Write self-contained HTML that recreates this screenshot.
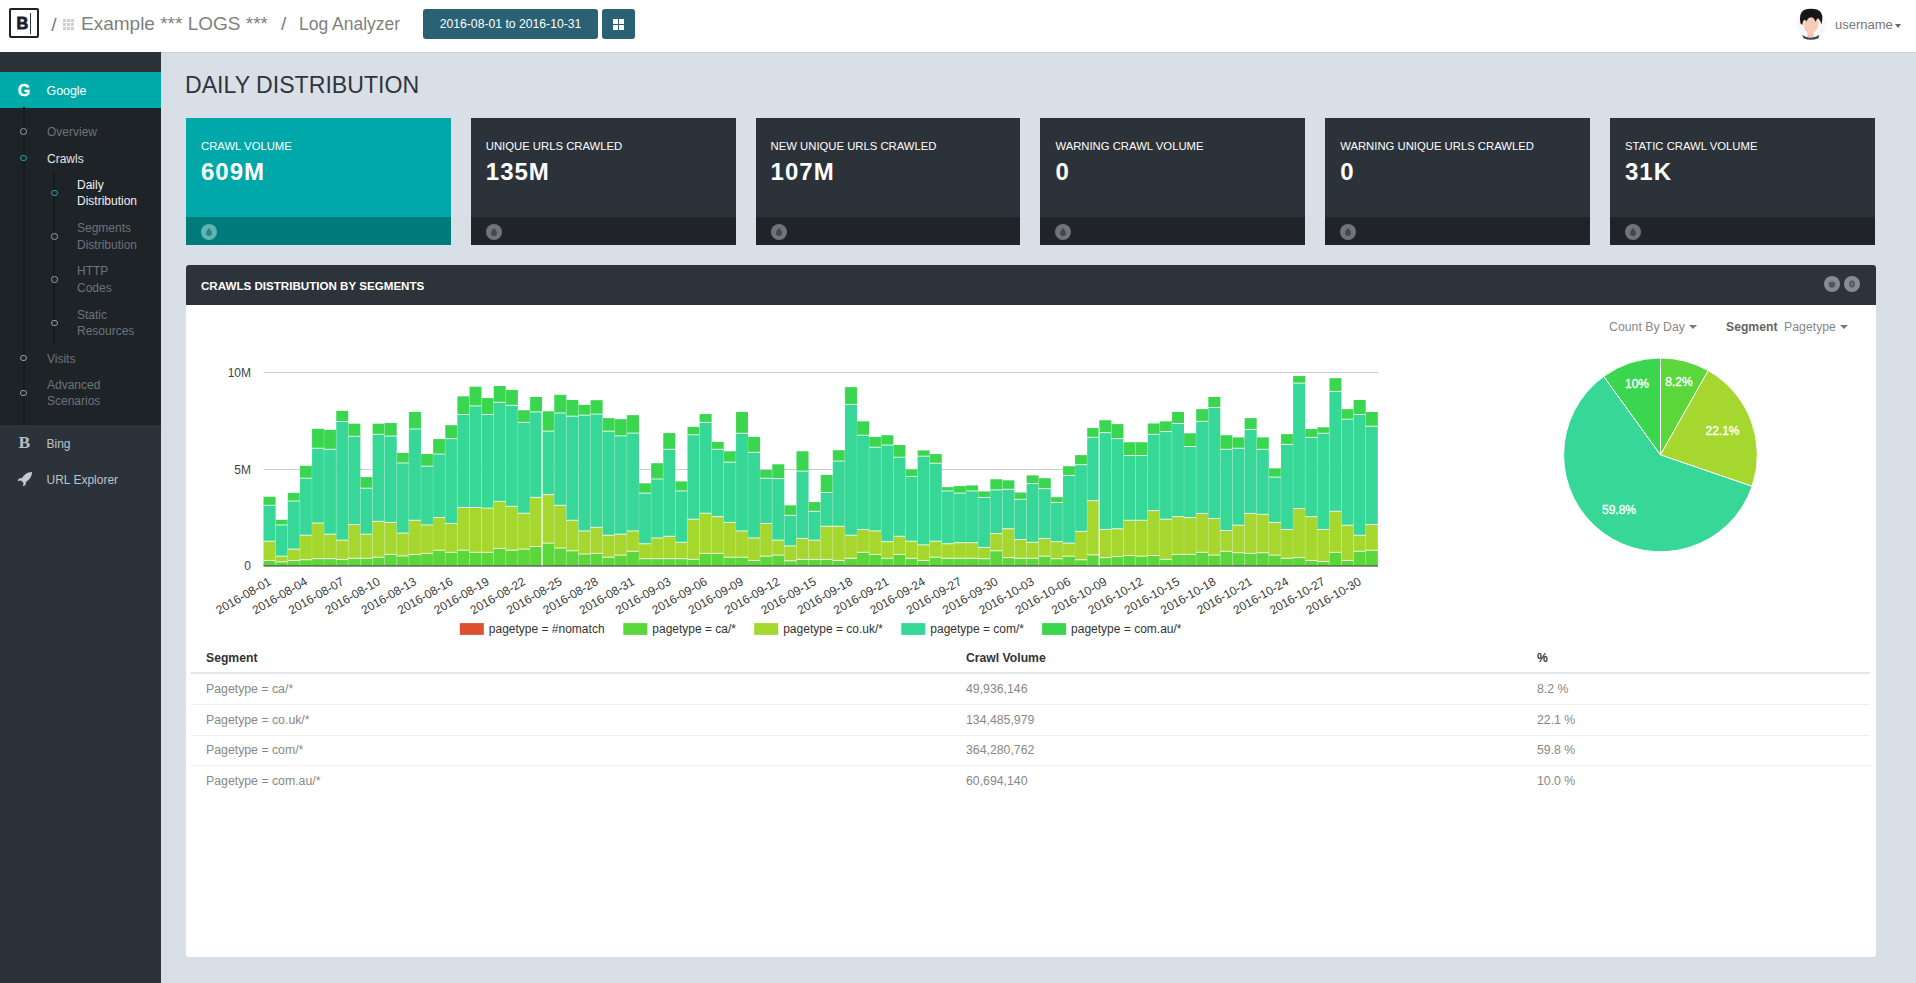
<!DOCTYPE html><html><head><meta charset="utf-8"><title>Log Analyzer</title><style>
*{box-sizing:border-box}
html,body{margin:0;padding:0}
body{width:1916px;height:983px;overflow:hidden;background:#d9dfe6;font-family:"Liberation Sans",sans-serif;position:relative}
.a{position:absolute;white-space:nowrap}
.hdr{left:0;top:0;width:1916px;height:52px;background:#fff}
.hline{left:161px;top:52px;width:1755px;height:1px;background:#c5ccd3}
.vline{left:165px;top:53px;width:1px;height:930px;background:#d5dbe2}
.side{left:0;top:52px;width:161px;height:931px;background:#2b3239}
.sub{left:0;top:108px;width:161px;height:317px;background:#1e2328}
.nav{font-size:12px;color:#6d7379;line-height:16px}
.ring{width:6.6px;height:6.6px;border:1.7px solid #9a9fa4;border-radius:50%;background:#1e2328}
.card{width:264.8px;height:127px;background:#2c3239;top:118px}
.card .ft{position:absolute;left:0;bottom:0;width:100%;height:28px;background:#202428}
.card .lb{position:absolute;left:15px;top:20px;font-size:11.3px;color:#fff;line-height:16px}
.card .vl{position:absolute;left:15px;top:40px;font-size:24px;font-weight:bold;color:#fff;line-height:28px;letter-spacing:1px}
.card .ic{position:absolute;left:15px;top:7px;width:16px;height:16px;border-radius:50%;background:#7a7f84}
.panel{left:186px;top:265px;width:1690px;height:692px;background:#fff;border-radius:3px}
.phd{left:186px;top:265px;width:1690px;height:40px;background:#2c333a;border-radius:3px 3px 0 0}
.th{font-size:12.2px;font-weight:bold;color:#333;line-height:16px}
.td{font-size:12.3px;color:#888;line-height:16px}
</style></head><body>
<div class="a hdr"></div><div class="a hline"></div><div class="a vline"></div>
<div class="a" style="left:9px;top:8px;width:30px;height:30px;border:2.4px solid #222;border-radius:2px;background:#fff"></div>
<div class="a" style="left:16.5px;top:14px;font-size:16.3px;font-weight:bold;color:#1e1b2a;line-height:18px;-webkit-text-stroke:0.8px #1e1b2a">B</div>
<div class="a" style="left:29.8px;top:13.2px;width:1.2px;height:20.4px;background:#333"></div>
<div class="a" style="left:51.3px;top:13.8px;font-size:19px;color:#777;line-height:22px">/</div>
<div class="a" style="left:63px;top:19px;width:3px;height:3px;background:#cfcfcf"></div><div class="a" style="left:67px;top:19px;width:3px;height:3px;background:#cfcfcf"></div><div class="a" style="left:71px;top:19px;width:3px;height:3px;background:#cfcfcf"></div><div class="a" style="left:63px;top:23px;width:3px;height:3px;background:#cfcfcf"></div><div class="a" style="left:67px;top:23px;width:3px;height:3px;background:#cfcfcf"></div><div class="a" style="left:71px;top:23px;width:3px;height:3px;background:#cfcfcf"></div><div class="a" style="left:63px;top:27px;width:3px;height:3px;background:#cfcfcf"></div><div class="a" style="left:67px;top:27px;width:3px;height:3px;background:#cfcfcf"></div><div class="a" style="left:71px;top:27px;width:3px;height:3px;background:#cfcfcf"></div>
<div class="a" style="left:81px;top:13px;font-size:19px;color:#808080;line-height:22px">Example *** LOGS ***</div>
<div class="a" style="left:281px;top:13px;font-size:19px;color:#777;line-height:22px">/</div>
<div class="a" style="left:299px;top:13px;font-size:17.5px;color:#808080;line-height:22px">Log Analyzer</div>
<div class="a" style="left:423px;top:9px;width:175px;height:30px;background:#2a6175;border-radius:3px;color:#fff;font-size:12.2px;line-height:30px;text-align:center">2016-08-01 to 2016-10-31</div>
<div class="a" style="left:602px;top:9px;width:33px;height:30px;background:#2a6175;border-radius:3px"></div>
<div class="a" style="left:613px;top:19px;width:5px;height:5px;background:#fff"></div>
<div class="a" style="left:619px;top:19px;width:5px;height:5px;background:#fff"></div>
<div class="a" style="left:613px;top:25px;width:5px;height:5px;background:#fff"></div>
<div class="a" style="left:619px;top:25px;width:5px;height:5px;background:#fff"></div>
<svg class="a" style="left:1792px;top:4px" width="40" height="40" viewBox="0 0 40 40"><circle cx="19" cy="20" r="14.8" fill="#f6f7f9"/><path d="M10.2 31 Q18.5 36 27.3 31 L26.5 34.2 Q18.5 37.5 11.5 34.2 Z" fill="#3b4b49"/><path d="M15.5 27 L15.5 33 Q18.5 34 21.5 33 L21.5 27 Z" fill="#f3c3a8"/><path d="M11.8 14 L11.8 22 Q12.5 28 18.3 30 Q24 28 26.4 22 L26.4 14 Z" fill="#f7cdb5"/><path d="M8.5 19.5 Q6.5 9 12 6 Q18 3.6 25 5.5 Q31 8 30.3 15 L29.6 20.5 Q28 16 26.5 14.5 Q25 13.5 23.5 18 Q22 13 19.5 13.5 Q16 13 14.5 17.5 Q13 15 12 16 Q10.5 17.5 10.3 21 Z" fill="#161616"/></svg>
<div class="a" style="left:1835px;top:17px;font-size:13px;color:#777;line-height:16px">username</div>
<div class="a" style="left:1894.5px;top:24px;width:0;height:0;border-left:3.5px solid transparent;border-right:3.5px solid transparent;border-top:4px solid #666"></div>
<div class="a side"></div>
<div class="a" style="left:0;top:72px;width:161px;height:36px;background:#00aaa9"></div>
<div class="a" style="left:17.8px;top:81.5px;font-size:16px;font-weight:bold;color:#fff;line-height:18px;-webkit-text-stroke:0.3px #fff">G</div>
<div class="a" style="left:46.5px;top:82.5px;font-size:12.4px;color:#fff;line-height:16px">Google</div>
<div class="a sub"></div>
<div class="a" style="left:23px;top:107px;width:2px;height:318px;background:#161a1e"></div>
<div class="a" style="left:53px;top:172px;width:2px;height:171px;background:#161a1e"></div>
<div class="a ring" style="left:20.2px;top:128.2px;border-color:#9a9fa4"></div>
<div class="a nav" style="left:47px;top:124.0px;color:#6d7379">Overview</div>
<div class="a ring" style="left:20.2px;top:154.7px;border-color:#1aa3a3"></div>
<div class="a nav" style="left:47px;top:151px;color:#e6e6e6">Crawls</div>
<div class="a ring" style="left:20.2px;top:354.7px;border-color:#9a9fa4"></div>
<div class="a nav" style="left:47px;top:350.5px;color:#6d7379">Visits</div>
<div class="a ring" style="left:20.2px;top:389.7px;border-color:#9a9fa4"></div>
<div class="a nav" style="left:47px;top:376.5px;color:#6d7379;line-height:16.5px">Advanced<br>Scenarios</div>
<div class="a ring" style="left:51.2px;top:189.7px;border-color:#1aa3a3"></div>
<div class="a nav" style="left:77px;top:176.5px;color:#f0f0f0;line-height:16.5px">Daily<br>Distribution</div>
<div class="a ring" style="left:51.2px;top:233.2px;border-color:#9a9fa4"></div>
<div class="a nav" style="left:77px;top:220.0px;color:#6d7379;line-height:16.5px">Segments<br>Distribution</div>
<div class="a ring" style="left:51.2px;top:276.2px;border-color:#9a9fa4"></div>
<div class="a nav" style="left:77px;top:263.0px;color:#6d7379;line-height:16.5px">HTTP<br>Codes</div>
<div class="a ring" style="left:51.2px;top:319.7px;border-color:#9a9fa4"></div>
<div class="a nav" style="left:77px;top:306.5px;color:#6d7379;line-height:16.5px">Static<br>Resources</div>
<div class="a" style="left:18.5px;top:432.5px;font-size:17.5px;font-weight:bold;color:#b9bdc1;line-height:18px;font-family:'Liberation Serif',serif">B</div>
<div class="a nav" style="left:46.5px;top:435.5px;color:#bfc3c7">Bing</div>
<svg class="a" style="left:16.5px;top:470.5px" width="16" height="16" viewBox="0 0 16 16"><path d="M15 1 C10 1 7 4 5 7 L2 7.5 L0.5 10 L4 9.5 L6.5 12 L6 15.5 L8.5 14 L9 11 C12 9 15 6 15 1 Z" fill="#c5c9cd"/></svg>
<div class="a nav" style="left:46.5px;top:471.5px;color:#bfc3c7">URL Explorer</div>
<div class="a" style="left:185.3px;top:70.4px;font-size:24.3px;color:#30353c;line-height:30px;transform:scaleX(0.951);transform-origin:0 0">DAILY DISTRIBUTION</div>
<div class="a card" style="left:186.0px;background:#00a8aa"><div class="lb">CRAWL VOLUME</div><div class="vl">609M</div><div class="ft" style="background:#007b7c"><div class="ic" style="background:#5db6b5"><svg width="16" height="16" viewBox="0 0 16 16" style="position:absolute;left:0;top:0"><path d="M8 3.8 C9.5 6 11 7.3 11 9.3 C11 11 9.7 12 8 12 C6.3 12 5 11 5 9.3 C5 7.3 6.5 6 8 3.8 Z" fill="#2f8583"/></svg></div></div></div>
<div class="a card" style="left:470.8px;background:#2c3239"><div class="lb">UNIQUE URLS CRAWLED</div><div class="vl">135M</div><div class="ft" style="background:#202428"><div class="ic" style="background:#6f7479"><svg width="16" height="16" viewBox="0 0 16 16" style="position:absolute;left:0;top:0"><path d="M8 3.8 C9.5 6 11 7.3 11 9.3 C11 11 9.7 12 8 12 C6.3 12 5 11 5 9.3 C5 7.3 6.5 6 8 3.8 Z" fill="#45494d"/></svg></div></div></div>
<div class="a card" style="left:755.6px;background:#2c3239"><div class="lb">NEW UNIQUE URLS CRAWLED</div><div class="vl">107M</div><div class="ft" style="background:#202428"><div class="ic" style="background:#6f7479"><svg width="16" height="16" viewBox="0 0 16 16" style="position:absolute;left:0;top:0"><path d="M8 3.8 C9.5 6 11 7.3 11 9.3 C11 11 9.7 12 8 12 C6.3 12 5 11 5 9.3 C5 7.3 6.5 6 8 3.8 Z" fill="#45494d"/></svg></div></div></div>
<div class="a card" style="left:1040.4px;background:#2c3239"><div class="lb">WARNING CRAWL VOLUME</div><div class="vl">0</div><div class="ft" style="background:#202428"><div class="ic" style="background:#6f7479"><svg width="16" height="16" viewBox="0 0 16 16" style="position:absolute;left:0;top:0"><path d="M8 3.8 C9.5 6 11 7.3 11 9.3 C11 11 9.7 12 8 12 C6.3 12 5 11 5 9.3 C5 7.3 6.5 6 8 3.8 Z" fill="#45494d"/></svg></div></div></div>
<div class="a card" style="left:1325.2px;background:#2c3239"><div class="lb">WARNING UNIQUE URLS CRAWLED</div><div class="vl">0</div><div class="ft" style="background:#202428"><div class="ic" style="background:#6f7479"><svg width="16" height="16" viewBox="0 0 16 16" style="position:absolute;left:0;top:0"><path d="M8 3.8 C9.5 6 11 7.3 11 9.3 C11 11 9.7 12 8 12 C6.3 12 5 11 5 9.3 C5 7.3 6.5 6 8 3.8 Z" fill="#45494d"/></svg></div></div></div>
<div class="a card" style="left:1610.0px;background:#2c3239"><div class="lb">STATIC CRAWL VOLUME</div><div class="vl">31K</div><div class="ft" style="background:#202428"><div class="ic" style="background:#6f7479"><svg width="16" height="16" viewBox="0 0 16 16" style="position:absolute;left:0;top:0"><path d="M8 3.8 C9.5 6 11 7.3 11 9.3 C11 11 9.7 12 8 12 C6.3 12 5 11 5 9.3 C5 7.3 6.5 6 8 3.8 Z" fill="#45494d"/></svg></div></div></div>
<div class="a panel"></div>
<div class="a phd"></div>
<div class="a" style="left:201px;top:278px;font-size:11.6px;font-weight:bold;color:#fff;line-height:16px">CRAWLS DISTRIBUTION BY SEGMENTS</div>
<svg class="a" style="left:1824px;top:276px" width="16" height="16" viewBox="0 0 16 16"><circle cx="8" cy="8" r="8" fill="#868c94"/><path d="M6.2 5.2 Q8 3.6 9.8 5.2 Z M5.3 6 L10.7 6 L10.7 9.5 Q10.7 11.8 8 11.8 Q5.3 11.8 5.3 9.5 Z" fill="#50555c"/><path d="M4 7 L5.3 7.5 M4 9.5 L5.3 9.3 M12 7 L10.7 7.5 M12 9.5 L10.7 9.3" stroke="#50555c" stroke-width="0.8"/></svg>
<svg class="a" style="left:1844px;top:276px" width="16" height="16" viewBox="0 0 16 16"><circle cx="8" cy="8" r="8" fill="#868c94"/><ellipse cx="8" cy="8" rx="2.8" ry="3.4" fill="#50555c"/><rect x="7.4" y="6.3" width="1.2" height="3.6" fill="#868c94"/></svg>
<div class="a td" style="left:1609px;top:319px">Count By Day</div>
<div class="a" style="left:1689px;top:325px;width:0;height:0;border-left:4px solid transparent;border-right:4px solid transparent;border-top:4px solid #777"></div>
<div class="a th" style="left:1726px;top:319px;color:#666">Segment</div>
<div class="a td" style="left:1784px;top:319px">Pagetype</div>
<div class="a" style="left:1840px;top:325px;width:0;height:0;border-left:4px solid transparent;border-right:4px solid transparent;border-top:4px solid #777"></div>
<svg class="a" style="left:0;top:0" width="1916" height="983" font-family="Liberation Sans, sans-serif"><line x1="263.5" y1="372.5" x2="1378" y2="372.5" stroke="#cccccc" stroke-width="1"/>
<line x1="263.5" y1="469.5" x2="1378" y2="469.5" stroke="#cccccc" stroke-width="1"/>
<rect x="263.50" y="560.43" width="12.11" height="5.57" fill="#5bd63b"/>
<rect x="263.50" y="541.20" width="12.11" height="19.23" fill="#a5d72f"/>
<rect x="263.50" y="505.30" width="12.11" height="35.90" fill="#36d797"/>
<rect x="263.50" y="496.75" width="12.11" height="8.55" fill="#3bd650"/>
<rect x="263.50" y="504.80" width="12.11" height="1" fill="#ffffff" fill-opacity="0.8"/>
<rect x="263.50" y="540.70" width="12.11" height="1" fill="#ffffff" fill-opacity="0.8"/>
<rect x="263.50" y="559.93" width="12.11" height="1" fill="#ffffff" fill-opacity="0.8"/>
<rect x="275.61" y="561.92" width="12.11" height="4.08" fill="#5bd63b"/>
<rect x="275.61" y="556.15" width="12.11" height="5.77" fill="#a5d72f"/>
<rect x="275.61" y="524.96" width="12.11" height="31.20" fill="#36d797"/>
<rect x="275.61" y="519.83" width="12.11" height="5.13" fill="#3bd650"/>
<rect x="275.61" y="524.46" width="12.11" height="1" fill="#ffffff" fill-opacity="0.8"/>
<rect x="275.61" y="555.65" width="12.11" height="1" fill="#ffffff" fill-opacity="0.8"/>
<rect x="275.61" y="561.42" width="12.11" height="1" fill="#ffffff" fill-opacity="0.8"/>
<rect x="275.11" y="519.83" width="1" height="46.17" fill="#ffffff" fill-opacity="0.18"/>
<rect x="287.72" y="560.43" width="12.11" height="5.57" fill="#5bd63b"/>
<rect x="287.72" y="549.10" width="12.11" height="11.32" fill="#a5d72f"/>
<rect x="287.72" y="501.03" width="12.11" height="48.08" fill="#36d797"/>
<rect x="287.72" y="492.91" width="12.11" height="8.12" fill="#3bd650"/>
<rect x="287.72" y="500.53" width="12.11" height="1" fill="#ffffff" fill-opacity="0.8"/>
<rect x="287.72" y="548.60" width="12.11" height="1" fill="#ffffff" fill-opacity="0.8"/>
<rect x="287.72" y="559.93" width="12.11" height="1" fill="#ffffff" fill-opacity="0.8"/>
<rect x="287.22" y="492.91" width="1" height="73.09" fill="#ffffff" fill-opacity="0.18"/>
<rect x="299.84" y="559.79" width="12.11" height="6.21" fill="#5bd63b"/>
<rect x="299.84" y="535.21" width="12.11" height="24.57" fill="#a5d72f"/>
<rect x="299.84" y="478.16" width="12.11" height="57.05" fill="#36d797"/>
<rect x="299.84" y="465.77" width="12.11" height="12.39" fill="#3bd650"/>
<rect x="299.84" y="477.66" width="12.11" height="1" fill="#ffffff" fill-opacity="0.8"/>
<rect x="299.84" y="534.71" width="12.11" height="1" fill="#ffffff" fill-opacity="0.8"/>
<rect x="299.84" y="559.29" width="12.11" height="1" fill="#ffffff" fill-opacity="0.8"/>
<rect x="299.34" y="465.77" width="1" height="100.23" fill="#ffffff" fill-opacity="0.18"/>
<rect x="311.95" y="558.72" width="12.11" height="7.28" fill="#5bd63b"/>
<rect x="311.95" y="523.03" width="12.11" height="35.68" fill="#a5d72f"/>
<rect x="311.95" y="448.25" width="12.11" height="74.79" fill="#36d797"/>
<rect x="311.95" y="428.80" width="12.11" height="19.44" fill="#3bd650"/>
<rect x="311.95" y="447.75" width="12.11" height="1" fill="#ffffff" fill-opacity="0.8"/>
<rect x="311.95" y="522.53" width="12.11" height="1" fill="#ffffff" fill-opacity="0.8"/>
<rect x="311.95" y="558.22" width="12.11" height="1" fill="#ffffff" fill-opacity="0.8"/>
<rect x="311.45" y="428.80" width="1" height="137.20" fill="#ffffff" fill-opacity="0.18"/>
<rect x="324.06" y="558.72" width="12.11" height="7.28" fill="#5bd63b"/>
<rect x="324.06" y="534.15" width="12.11" height="24.57" fill="#a5d72f"/>
<rect x="324.06" y="449.32" width="12.11" height="84.83" fill="#36d797"/>
<rect x="324.06" y="429.87" width="12.11" height="19.44" fill="#3bd650"/>
<rect x="324.06" y="448.82" width="12.11" height="1" fill="#ffffff" fill-opacity="0.8"/>
<rect x="324.06" y="533.65" width="12.11" height="1" fill="#ffffff" fill-opacity="0.8"/>
<rect x="324.06" y="558.22" width="12.11" height="1" fill="#ffffff" fill-opacity="0.8"/>
<rect x="323.56" y="429.87" width="1" height="136.13" fill="#ffffff" fill-opacity="0.18"/>
<rect x="336.17" y="559.36" width="12.11" height="6.64" fill="#5bd63b"/>
<rect x="336.17" y="540.13" width="12.11" height="19.23" fill="#a5d72f"/>
<rect x="336.17" y="421.54" width="12.11" height="118.59" fill="#36d797"/>
<rect x="336.17" y="410.85" width="12.11" height="10.68" fill="#3bd650"/>
<rect x="336.17" y="421.04" width="12.11" height="1" fill="#ffffff" fill-opacity="0.8"/>
<rect x="336.17" y="539.63" width="12.11" height="1" fill="#ffffff" fill-opacity="0.8"/>
<rect x="336.17" y="558.86" width="12.11" height="1" fill="#ffffff" fill-opacity="0.8"/>
<rect x="335.67" y="410.85" width="1" height="155.15" fill="#ffffff" fill-opacity="0.18"/>
<rect x="348.28" y="558.29" width="12.11" height="7.71" fill="#5bd63b"/>
<rect x="348.28" y="524.53" width="12.11" height="33.76" fill="#a5d72f"/>
<rect x="348.28" y="436.28" width="12.11" height="88.25" fill="#36d797"/>
<rect x="348.28" y="423.68" width="12.11" height="12.61" fill="#3bd650"/>
<rect x="348.28" y="435.78" width="12.11" height="1" fill="#ffffff" fill-opacity="0.8"/>
<rect x="348.28" y="524.03" width="12.11" height="1" fill="#ffffff" fill-opacity="0.8"/>
<rect x="348.28" y="557.79" width="12.11" height="1" fill="#ffffff" fill-opacity="0.8"/>
<rect x="347.78" y="423.68" width="1" height="142.32" fill="#ffffff" fill-opacity="0.18"/>
<rect x="360.40" y="558.29" width="12.11" height="7.71" fill="#5bd63b"/>
<rect x="360.40" y="534.15" width="12.11" height="24.15" fill="#a5d72f"/>
<rect x="360.40" y="488.21" width="12.11" height="45.94" fill="#36d797"/>
<rect x="360.40" y="477.09" width="12.11" height="11.11" fill="#3bd650"/>
<rect x="360.40" y="487.71" width="12.11" height="1" fill="#ffffff" fill-opacity="0.8"/>
<rect x="360.40" y="533.65" width="12.11" height="1" fill="#ffffff" fill-opacity="0.8"/>
<rect x="360.40" y="557.79" width="12.11" height="1" fill="#ffffff" fill-opacity="0.8"/>
<rect x="359.90" y="477.09" width="1" height="88.91" fill="#ffffff" fill-opacity="0.18"/>
<rect x="372.51" y="557.22" width="12.11" height="8.78" fill="#5bd63b"/>
<rect x="372.51" y="521.32" width="12.11" height="35.90" fill="#a5d72f"/>
<rect x="372.51" y="434.36" width="12.11" height="86.97" fill="#36d797"/>
<rect x="372.51" y="423.68" width="12.11" height="10.68" fill="#3bd650"/>
<rect x="372.51" y="433.86" width="12.11" height="1" fill="#ffffff" fill-opacity="0.8"/>
<rect x="372.51" y="520.82" width="12.11" height="1" fill="#ffffff" fill-opacity="0.8"/>
<rect x="372.51" y="556.72" width="12.11" height="1" fill="#ffffff" fill-opacity="0.8"/>
<rect x="372.01" y="423.68" width="1" height="142.32" fill="#ffffff" fill-opacity="0.18"/>
<rect x="384.62" y="554.44" width="12.11" height="11.56" fill="#5bd63b"/>
<rect x="384.62" y="522.39" width="12.11" height="32.05" fill="#a5d72f"/>
<rect x="384.62" y="436.07" width="12.11" height="86.32" fill="#36d797"/>
<rect x="384.62" y="423.03" width="12.11" height="13.03" fill="#3bd650"/>
<rect x="384.62" y="435.57" width="12.11" height="1" fill="#ffffff" fill-opacity="0.8"/>
<rect x="384.62" y="521.89" width="12.11" height="1" fill="#ffffff" fill-opacity="0.8"/>
<rect x="384.62" y="553.94" width="12.11" height="1" fill="#ffffff" fill-opacity="0.8"/>
<rect x="384.12" y="423.03" width="1" height="142.97" fill="#ffffff" fill-opacity="0.18"/>
<rect x="396.73" y="555.94" width="12.11" height="10.06" fill="#5bd63b"/>
<rect x="396.73" y="533.08" width="12.11" height="22.86" fill="#a5d72f"/>
<rect x="396.73" y="462.99" width="12.11" height="70.09" fill="#36d797"/>
<rect x="396.73" y="452.95" width="12.11" height="10.04" fill="#3bd650"/>
<rect x="396.73" y="462.49" width="12.11" height="1" fill="#ffffff" fill-opacity="0.8"/>
<rect x="396.73" y="532.58" width="12.11" height="1" fill="#ffffff" fill-opacity="0.8"/>
<rect x="396.73" y="555.44" width="12.11" height="1" fill="#ffffff" fill-opacity="0.8"/>
<rect x="396.23" y="452.95" width="1" height="113.05" fill="#ffffff" fill-opacity="0.18"/>
<rect x="408.84" y="554.44" width="12.11" height="11.56" fill="#5bd63b"/>
<rect x="408.84" y="520.26" width="12.11" height="34.19" fill="#a5d72f"/>
<rect x="408.84" y="429.02" width="12.11" height="91.24" fill="#36d797"/>
<rect x="408.84" y="411.92" width="12.11" height="17.09" fill="#3bd650"/>
<rect x="408.84" y="428.52" width="12.11" height="1" fill="#ffffff" fill-opacity="0.8"/>
<rect x="408.84" y="519.76" width="12.11" height="1" fill="#ffffff" fill-opacity="0.8"/>
<rect x="408.84" y="553.94" width="12.11" height="1" fill="#ffffff" fill-opacity="0.8"/>
<rect x="408.34" y="411.92" width="1" height="154.08" fill="#ffffff" fill-opacity="0.18"/>
<rect x="420.96" y="553.38" width="12.11" height="12.62" fill="#5bd63b"/>
<rect x="420.96" y="524.96" width="12.11" height="28.42" fill="#a5d72f"/>
<rect x="420.96" y="466.20" width="12.11" height="58.76" fill="#36d797"/>
<rect x="420.96" y="454.02" width="12.11" height="12.18" fill="#3bd650"/>
<rect x="420.96" y="465.70" width="12.11" height="1" fill="#ffffff" fill-opacity="0.8"/>
<rect x="420.96" y="524.46" width="12.11" height="1" fill="#ffffff" fill-opacity="0.8"/>
<rect x="420.96" y="552.88" width="12.11" height="1" fill="#ffffff" fill-opacity="0.8"/>
<rect x="420.46" y="454.02" width="1" height="111.98" fill="#ffffff" fill-opacity="0.18"/>
<rect x="433.07" y="550.17" width="12.11" height="15.83" fill="#5bd63b"/>
<rect x="433.07" y="517.48" width="12.11" height="32.69" fill="#a5d72f"/>
<rect x="433.07" y="454.02" width="12.11" height="63.46" fill="#36d797"/>
<rect x="433.07" y="439.06" width="12.11" height="14.96" fill="#3bd650"/>
<rect x="433.07" y="453.52" width="12.11" height="1" fill="#ffffff" fill-opacity="0.8"/>
<rect x="433.07" y="516.98" width="12.11" height="1" fill="#ffffff" fill-opacity="0.8"/>
<rect x="433.07" y="549.67" width="12.11" height="1" fill="#ffffff" fill-opacity="0.8"/>
<rect x="432.57" y="439.06" width="1" height="126.94" fill="#ffffff" fill-opacity="0.18"/>
<rect x="445.18" y="552.31" width="12.11" height="13.69" fill="#5bd63b"/>
<rect x="445.18" y="523.46" width="12.11" height="28.85" fill="#a5d72f"/>
<rect x="445.18" y="438.63" width="12.11" height="84.83" fill="#36d797"/>
<rect x="445.18" y="425.17" width="12.11" height="13.46" fill="#3bd650"/>
<rect x="445.18" y="438.13" width="12.11" height="1" fill="#ffffff" fill-opacity="0.8"/>
<rect x="445.18" y="522.96" width="12.11" height="1" fill="#ffffff" fill-opacity="0.8"/>
<rect x="445.18" y="551.81" width="12.11" height="1" fill="#ffffff" fill-opacity="0.8"/>
<rect x="444.68" y="425.17" width="1" height="140.83" fill="#ffffff" fill-opacity="0.18"/>
<rect x="457.29" y="550.17" width="12.11" height="15.83" fill="#5bd63b"/>
<rect x="457.29" y="507.44" width="12.11" height="42.74" fill="#a5d72f"/>
<rect x="457.29" y="414.49" width="12.11" height="92.95" fill="#36d797"/>
<rect x="457.29" y="396.32" width="12.11" height="18.16" fill="#3bd650"/>
<rect x="457.29" y="413.99" width="12.11" height="1" fill="#ffffff" fill-opacity="0.8"/>
<rect x="457.29" y="506.94" width="12.11" height="1" fill="#ffffff" fill-opacity="0.8"/>
<rect x="457.29" y="549.67" width="12.11" height="1" fill="#ffffff" fill-opacity="0.8"/>
<rect x="456.79" y="396.32" width="1" height="169.68" fill="#ffffff" fill-opacity="0.18"/>
<rect x="469.40" y="552.31" width="12.11" height="13.69" fill="#5bd63b"/>
<rect x="469.40" y="507.44" width="12.11" height="44.87" fill="#a5d72f"/>
<rect x="469.40" y="405.94" width="12.11" height="101.50" fill="#36d797"/>
<rect x="469.40" y="386.71" width="12.11" height="19.23" fill="#3bd650"/>
<rect x="469.40" y="405.44" width="12.11" height="1" fill="#ffffff" fill-opacity="0.8"/>
<rect x="469.40" y="506.94" width="12.11" height="1" fill="#ffffff" fill-opacity="0.8"/>
<rect x="469.40" y="551.81" width="12.11" height="1" fill="#ffffff" fill-opacity="0.8"/>
<rect x="468.90" y="386.71" width="1" height="179.29" fill="#ffffff" fill-opacity="0.18"/>
<rect x="481.52" y="552.31" width="12.11" height="13.69" fill="#5bd63b"/>
<rect x="481.52" y="508.08" width="12.11" height="44.23" fill="#a5d72f"/>
<rect x="481.52" y="414.49" width="12.11" height="93.59" fill="#36d797"/>
<rect x="481.52" y="398.03" width="12.11" height="16.45" fill="#3bd650"/>
<rect x="481.52" y="413.99" width="12.11" height="1" fill="#ffffff" fill-opacity="0.8"/>
<rect x="481.52" y="507.58" width="12.11" height="1" fill="#ffffff" fill-opacity="0.8"/>
<rect x="481.52" y="551.81" width="12.11" height="1" fill="#ffffff" fill-opacity="0.8"/>
<rect x="481.02" y="398.03" width="1" height="167.97" fill="#ffffff" fill-opacity="0.18"/>
<rect x="493.63" y="548.46" width="12.11" height="17.54" fill="#5bd63b"/>
<rect x="493.63" y="501.45" width="12.11" height="47.01" fill="#a5d72f"/>
<rect x="493.63" y="402.31" width="12.11" height="99.15" fill="#36d797"/>
<rect x="493.63" y="386.07" width="12.11" height="16.24" fill="#3bd650"/>
<rect x="493.63" y="401.81" width="12.11" height="1" fill="#ffffff" fill-opacity="0.8"/>
<rect x="493.63" y="500.95" width="12.11" height="1" fill="#ffffff" fill-opacity="0.8"/>
<rect x="493.63" y="547.96" width="12.11" height="1" fill="#ffffff" fill-opacity="0.8"/>
<rect x="493.13" y="386.07" width="1" height="179.93" fill="#ffffff" fill-opacity="0.18"/>
<rect x="505.74" y="550.17" width="12.11" height="15.83" fill="#5bd63b"/>
<rect x="505.74" y="506.37" width="12.11" height="43.80" fill="#a5d72f"/>
<rect x="505.74" y="405.30" width="12.11" height="101.07" fill="#36d797"/>
<rect x="505.74" y="389.91" width="12.11" height="15.38" fill="#3bd650"/>
<rect x="505.74" y="404.80" width="12.11" height="1" fill="#ffffff" fill-opacity="0.8"/>
<rect x="505.74" y="505.87" width="12.11" height="1" fill="#ffffff" fill-opacity="0.8"/>
<rect x="505.74" y="549.67" width="12.11" height="1" fill="#ffffff" fill-opacity="0.8"/>
<rect x="505.24" y="389.91" width="1" height="176.09" fill="#ffffff" fill-opacity="0.18"/>
<rect x="517.85" y="549.10" width="12.11" height="16.90" fill="#5bd63b"/>
<rect x="517.85" y="513.21" width="12.11" height="35.90" fill="#a5d72f"/>
<rect x="517.85" y="422.39" width="12.11" height="90.81" fill="#36d797"/>
<rect x="517.85" y="410.21" width="12.11" height="12.18" fill="#3bd650"/>
<rect x="517.85" y="421.89" width="12.11" height="1" fill="#ffffff" fill-opacity="0.8"/>
<rect x="517.85" y="512.71" width="12.11" height="1" fill="#ffffff" fill-opacity="0.8"/>
<rect x="517.85" y="548.60" width="12.11" height="1" fill="#ffffff" fill-opacity="0.8"/>
<rect x="517.35" y="410.21" width="1" height="155.79" fill="#ffffff" fill-opacity="0.18"/>
<rect x="529.96" y="546.54" width="12.11" height="19.46" fill="#5bd63b"/>
<rect x="529.96" y="497.39" width="12.11" height="49.15" fill="#a5d72f"/>
<rect x="529.96" y="411.92" width="12.11" height="85.47" fill="#36d797"/>
<rect x="529.96" y="396.97" width="12.11" height="14.96" fill="#3bd650"/>
<rect x="529.96" y="411.42" width="12.11" height="1" fill="#ffffff" fill-opacity="0.8"/>
<rect x="529.96" y="496.89" width="12.11" height="1" fill="#ffffff" fill-opacity="0.8"/>
<rect x="529.96" y="546.04" width="12.11" height="1" fill="#ffffff" fill-opacity="0.8"/>
<rect x="529.46" y="396.97" width="1" height="169.03" fill="#ffffff" fill-opacity="0.18"/>
<rect x="542.08" y="543.12" width="12.11" height="22.88" fill="#5bd63b"/>
<rect x="542.08" y="494.62" width="12.11" height="48.50" fill="#a5d72f"/>
<rect x="542.08" y="431.15" width="12.11" height="63.46" fill="#36d797"/>
<rect x="542.08" y="411.28" width="12.11" height="19.87" fill="#3bd650"/>
<rect x="542.08" y="430.65" width="12.11" height="1" fill="#ffffff" fill-opacity="0.8"/>
<rect x="542.08" y="494.12" width="12.11" height="1" fill="#ffffff" fill-opacity="0.8"/>
<rect x="542.08" y="542.62" width="12.11" height="1" fill="#ffffff" fill-opacity="0.8"/>
<rect x="541.58" y="411.28" width="1" height="154.72" fill="#ffffff" fill-opacity="0.18"/>
<rect x="554.19" y="548.03" width="12.11" height="17.97" fill="#5bd63b"/>
<rect x="554.19" y="505.30" width="12.11" height="42.74" fill="#a5d72f"/>
<rect x="554.19" y="412.99" width="12.11" height="92.31" fill="#36d797"/>
<rect x="554.19" y="394.83" width="12.11" height="18.16" fill="#3bd650"/>
<rect x="554.19" y="412.49" width="12.11" height="1" fill="#ffffff" fill-opacity="0.8"/>
<rect x="554.19" y="504.80" width="12.11" height="1" fill="#ffffff" fill-opacity="0.8"/>
<rect x="554.19" y="547.53" width="12.11" height="1" fill="#ffffff" fill-opacity="0.8"/>
<rect x="553.69" y="394.83" width="1" height="171.17" fill="#ffffff" fill-opacity="0.18"/>
<rect x="566.30" y="550.81" width="12.11" height="15.19" fill="#5bd63b"/>
<rect x="566.30" y="520.26" width="12.11" height="30.56" fill="#a5d72f"/>
<rect x="566.30" y="416.20" width="12.11" height="104.06" fill="#36d797"/>
<rect x="566.30" y="399.96" width="12.11" height="16.24" fill="#3bd650"/>
<rect x="566.30" y="415.70" width="12.11" height="1" fill="#ffffff" fill-opacity="0.8"/>
<rect x="566.30" y="519.76" width="12.11" height="1" fill="#ffffff" fill-opacity="0.8"/>
<rect x="566.30" y="550.31" width="12.11" height="1" fill="#ffffff" fill-opacity="0.8"/>
<rect x="565.80" y="399.96" width="1" height="166.04" fill="#ffffff" fill-opacity="0.18"/>
<rect x="578.41" y="554.02" width="12.11" height="11.98" fill="#5bd63b"/>
<rect x="578.41" y="530.94" width="12.11" height="23.08" fill="#a5d72f"/>
<rect x="578.41" y="415.13" width="12.11" height="115.81" fill="#36d797"/>
<rect x="578.41" y="404.87" width="12.11" height="10.26" fill="#3bd650"/>
<rect x="578.41" y="414.63" width="12.11" height="1" fill="#ffffff" fill-opacity="0.8"/>
<rect x="578.41" y="530.44" width="12.11" height="1" fill="#ffffff" fill-opacity="0.8"/>
<rect x="578.41" y="553.52" width="12.11" height="1" fill="#ffffff" fill-opacity="0.8"/>
<rect x="577.91" y="404.87" width="1" height="161.13" fill="#ffffff" fill-opacity="0.18"/>
<rect x="590.52" y="553.38" width="12.11" height="12.62" fill="#5bd63b"/>
<rect x="590.52" y="527.31" width="12.11" height="26.07" fill="#a5d72f"/>
<rect x="590.52" y="414.06" width="12.11" height="113.25" fill="#36d797"/>
<rect x="590.52" y="400.17" width="12.11" height="13.89" fill="#3bd650"/>
<rect x="590.52" y="413.56" width="12.11" height="1" fill="#ffffff" fill-opacity="0.8"/>
<rect x="590.52" y="526.81" width="12.11" height="1" fill="#ffffff" fill-opacity="0.8"/>
<rect x="590.52" y="552.88" width="12.11" height="1" fill="#ffffff" fill-opacity="0.8"/>
<rect x="590.02" y="400.17" width="1" height="165.83" fill="#ffffff" fill-opacity="0.18"/>
<rect x="602.63" y="557.22" width="12.11" height="8.78" fill="#5bd63b"/>
<rect x="602.63" y="535.21" width="12.11" height="22.01" fill="#a5d72f"/>
<rect x="602.63" y="431.15" width="12.11" height="104.06" fill="#36d797"/>
<rect x="602.63" y="418.12" width="12.11" height="13.03" fill="#3bd650"/>
<rect x="602.63" y="430.65" width="12.11" height="1" fill="#ffffff" fill-opacity="0.8"/>
<rect x="602.63" y="534.71" width="12.11" height="1" fill="#ffffff" fill-opacity="0.8"/>
<rect x="602.63" y="556.72" width="12.11" height="1" fill="#ffffff" fill-opacity="0.8"/>
<rect x="602.13" y="418.12" width="1" height="147.88" fill="#ffffff" fill-opacity="0.18"/>
<rect x="614.75" y="555.09" width="12.11" height="10.91" fill="#5bd63b"/>
<rect x="614.75" y="534.15" width="12.11" height="20.94" fill="#a5d72f"/>
<rect x="614.75" y="435.85" width="12.11" height="98.29" fill="#36d797"/>
<rect x="614.75" y="419.19" width="12.11" height="16.67" fill="#3bd650"/>
<rect x="614.75" y="435.35" width="12.11" height="1" fill="#ffffff" fill-opacity="0.8"/>
<rect x="614.75" y="533.65" width="12.11" height="1" fill="#ffffff" fill-opacity="0.8"/>
<rect x="614.75" y="554.59" width="12.11" height="1" fill="#ffffff" fill-opacity="0.8"/>
<rect x="614.25" y="419.19" width="1" height="146.81" fill="#ffffff" fill-opacity="0.18"/>
<rect x="626.86" y="551.24" width="12.11" height="14.76" fill="#5bd63b"/>
<rect x="626.86" y="530.94" width="12.11" height="20.30" fill="#a5d72f"/>
<rect x="626.86" y="433.08" width="12.11" height="97.86" fill="#36d797"/>
<rect x="626.86" y="415.13" width="12.11" height="17.95" fill="#3bd650"/>
<rect x="626.86" y="432.58" width="12.11" height="1" fill="#ffffff" fill-opacity="0.8"/>
<rect x="626.86" y="530.44" width="12.11" height="1" fill="#ffffff" fill-opacity="0.8"/>
<rect x="626.86" y="550.74" width="12.11" height="1" fill="#ffffff" fill-opacity="0.8"/>
<rect x="626.36" y="415.13" width="1" height="150.87" fill="#ffffff" fill-opacity="0.18"/>
<rect x="638.97" y="558.72" width="12.11" height="7.28" fill="#5bd63b"/>
<rect x="638.97" y="543.76" width="12.11" height="14.96" fill="#a5d72f"/>
<rect x="638.97" y="493.12" width="12.11" height="50.64" fill="#36d797"/>
<rect x="638.97" y="483.29" width="12.11" height="9.83" fill="#3bd650"/>
<rect x="638.97" y="492.62" width="12.11" height="1" fill="#ffffff" fill-opacity="0.8"/>
<rect x="638.97" y="543.26" width="12.11" height="1" fill="#ffffff" fill-opacity="0.8"/>
<rect x="638.97" y="558.22" width="12.11" height="1" fill="#ffffff" fill-opacity="0.8"/>
<rect x="638.47" y="483.29" width="1" height="82.71" fill="#ffffff" fill-opacity="0.18"/>
<rect x="651.08" y="558.72" width="12.11" height="7.28" fill="#5bd63b"/>
<rect x="651.08" y="537.99" width="12.11" height="20.73" fill="#a5d72f"/>
<rect x="651.08" y="479.02" width="12.11" height="58.97" fill="#36d797"/>
<rect x="651.08" y="463.21" width="12.11" height="15.81" fill="#3bd650"/>
<rect x="651.08" y="478.52" width="12.11" height="1" fill="#ffffff" fill-opacity="0.8"/>
<rect x="651.08" y="537.49" width="12.11" height="1" fill="#ffffff" fill-opacity="0.8"/>
<rect x="651.08" y="558.22" width="12.11" height="1" fill="#ffffff" fill-opacity="0.8"/>
<rect x="650.58" y="463.21" width="1" height="102.79" fill="#ffffff" fill-opacity="0.18"/>
<rect x="663.19" y="558.72" width="12.11" height="7.28" fill="#5bd63b"/>
<rect x="663.19" y="536.28" width="12.11" height="22.44" fill="#a5d72f"/>
<rect x="663.19" y="449.32" width="12.11" height="86.97" fill="#36d797"/>
<rect x="663.19" y="433.08" width="12.11" height="16.24" fill="#3bd650"/>
<rect x="663.19" y="448.82" width="12.11" height="1" fill="#ffffff" fill-opacity="0.8"/>
<rect x="663.19" y="535.78" width="12.11" height="1" fill="#ffffff" fill-opacity="0.8"/>
<rect x="663.19" y="558.22" width="12.11" height="1" fill="#ffffff" fill-opacity="0.8"/>
<rect x="662.69" y="433.08" width="1" height="132.92" fill="#ffffff" fill-opacity="0.18"/>
<rect x="675.31" y="558.72" width="12.11" height="7.28" fill="#5bd63b"/>
<rect x="675.31" y="542.26" width="12.11" height="16.45" fill="#a5d72f"/>
<rect x="675.31" y="490.98" width="12.11" height="51.28" fill="#36d797"/>
<rect x="675.31" y="481.37" width="12.11" height="9.62" fill="#3bd650"/>
<rect x="675.31" y="490.48" width="12.11" height="1" fill="#ffffff" fill-opacity="0.8"/>
<rect x="675.31" y="541.76" width="12.11" height="1" fill="#ffffff" fill-opacity="0.8"/>
<rect x="675.31" y="558.22" width="12.11" height="1" fill="#ffffff" fill-opacity="0.8"/>
<rect x="674.81" y="481.37" width="1" height="84.63" fill="#ffffff" fill-opacity="0.18"/>
<rect x="687.42" y="559.36" width="12.11" height="6.64" fill="#5bd63b"/>
<rect x="687.42" y="519.19" width="12.11" height="40.17" fill="#a5d72f"/>
<rect x="687.42" y="434.79" width="12.11" height="84.40" fill="#36d797"/>
<rect x="687.42" y="426.88" width="12.11" height="7.91" fill="#3bd650"/>
<rect x="687.42" y="434.29" width="12.11" height="1" fill="#ffffff" fill-opacity="0.8"/>
<rect x="687.42" y="518.69" width="12.11" height="1" fill="#ffffff" fill-opacity="0.8"/>
<rect x="687.42" y="558.86" width="12.11" height="1" fill="#ffffff" fill-opacity="0.8"/>
<rect x="686.92" y="426.88" width="1" height="139.12" fill="#ffffff" fill-opacity="0.18"/>
<rect x="699.53" y="553.38" width="12.11" height="12.62" fill="#5bd63b"/>
<rect x="699.53" y="513.21" width="12.11" height="40.17" fill="#a5d72f"/>
<rect x="699.53" y="422.39" width="12.11" height="90.81" fill="#36d797"/>
<rect x="699.53" y="414.06" width="12.11" height="8.33" fill="#3bd650"/>
<rect x="699.53" y="421.89" width="12.11" height="1" fill="#ffffff" fill-opacity="0.8"/>
<rect x="699.53" y="512.71" width="12.11" height="1" fill="#ffffff" fill-opacity="0.8"/>
<rect x="699.53" y="552.88" width="12.11" height="1" fill="#ffffff" fill-opacity="0.8"/>
<rect x="699.03" y="414.06" width="1" height="151.94" fill="#ffffff" fill-opacity="0.18"/>
<rect x="711.64" y="553.38" width="12.11" height="12.62" fill="#5bd63b"/>
<rect x="711.64" y="516.62" width="12.11" height="36.75" fill="#a5d72f"/>
<rect x="711.64" y="449.32" width="12.11" height="67.31" fill="#36d797"/>
<rect x="711.64" y="441.84" width="12.11" height="7.48" fill="#3bd650"/>
<rect x="711.64" y="448.82" width="12.11" height="1" fill="#ffffff" fill-opacity="0.8"/>
<rect x="711.64" y="516.12" width="12.11" height="1" fill="#ffffff" fill-opacity="0.8"/>
<rect x="711.64" y="552.88" width="12.11" height="1" fill="#ffffff" fill-opacity="0.8"/>
<rect x="711.14" y="441.84" width="1" height="124.16" fill="#ffffff" fill-opacity="0.18"/>
<rect x="723.75" y="557.22" width="12.11" height="8.78" fill="#5bd63b"/>
<rect x="723.75" y="522.39" width="12.11" height="34.83" fill="#a5d72f"/>
<rect x="723.75" y="462.14" width="12.11" height="60.26" fill="#36d797"/>
<rect x="723.75" y="451.24" width="12.11" height="10.90" fill="#3bd650"/>
<rect x="723.75" y="461.64" width="12.11" height="1" fill="#ffffff" fill-opacity="0.8"/>
<rect x="723.75" y="521.89" width="12.11" height="1" fill="#ffffff" fill-opacity="0.8"/>
<rect x="723.75" y="556.72" width="12.11" height="1" fill="#ffffff" fill-opacity="0.8"/>
<rect x="723.25" y="451.24" width="1" height="114.76" fill="#ffffff" fill-opacity="0.18"/>
<rect x="735.87" y="557.22" width="12.11" height="8.78" fill="#5bd63b"/>
<rect x="735.87" y="530.94" width="12.11" height="26.28" fill="#a5d72f"/>
<rect x="735.87" y="433.29" width="12.11" height="97.65" fill="#36d797"/>
<rect x="735.87" y="411.92" width="12.11" height="21.37" fill="#3bd650"/>
<rect x="735.87" y="432.79" width="12.11" height="1" fill="#ffffff" fill-opacity="0.8"/>
<rect x="735.87" y="530.44" width="12.11" height="1" fill="#ffffff" fill-opacity="0.8"/>
<rect x="735.87" y="556.72" width="12.11" height="1" fill="#ffffff" fill-opacity="0.8"/>
<rect x="735.37" y="411.92" width="1" height="154.08" fill="#ffffff" fill-opacity="0.18"/>
<rect x="747.98" y="560.43" width="12.11" height="5.57" fill="#5bd63b"/>
<rect x="747.98" y="537.99" width="12.11" height="22.44" fill="#a5d72f"/>
<rect x="747.98" y="452.31" width="12.11" height="85.68" fill="#36d797"/>
<rect x="747.98" y="436.92" width="12.11" height="15.38" fill="#3bd650"/>
<rect x="747.98" y="451.81" width="12.11" height="1" fill="#ffffff" fill-opacity="0.8"/>
<rect x="747.98" y="537.49" width="12.11" height="1" fill="#ffffff" fill-opacity="0.8"/>
<rect x="747.98" y="559.93" width="12.11" height="1" fill="#ffffff" fill-opacity="0.8"/>
<rect x="747.48" y="436.92" width="1" height="129.08" fill="#ffffff" fill-opacity="0.18"/>
<rect x="760.09" y="556.15" width="12.11" height="9.85" fill="#5bd63b"/>
<rect x="760.09" y="523.46" width="12.11" height="32.69" fill="#a5d72f"/>
<rect x="760.09" y="478.16" width="12.11" height="45.30" fill="#36d797"/>
<rect x="760.09" y="470.04" width="12.11" height="8.12" fill="#3bd650"/>
<rect x="760.09" y="477.66" width="12.11" height="1" fill="#ffffff" fill-opacity="0.8"/>
<rect x="760.09" y="522.96" width="12.11" height="1" fill="#ffffff" fill-opacity="0.8"/>
<rect x="760.09" y="555.65" width="12.11" height="1" fill="#ffffff" fill-opacity="0.8"/>
<rect x="759.59" y="470.04" width="1" height="95.96" fill="#ffffff" fill-opacity="0.18"/>
<rect x="772.20" y="555.09" width="12.11" height="10.91" fill="#5bd63b"/>
<rect x="772.20" y="540.13" width="12.11" height="14.96" fill="#a5d72f"/>
<rect x="772.20" y="478.59" width="12.11" height="61.54" fill="#36d797"/>
<rect x="772.20" y="464.27" width="12.11" height="14.32" fill="#3bd650"/>
<rect x="772.20" y="478.09" width="12.11" height="1" fill="#ffffff" fill-opacity="0.8"/>
<rect x="772.20" y="539.63" width="12.11" height="1" fill="#ffffff" fill-opacity="0.8"/>
<rect x="772.20" y="554.59" width="12.11" height="1" fill="#ffffff" fill-opacity="0.8"/>
<rect x="771.70" y="464.27" width="1" height="101.73" fill="#ffffff" fill-opacity="0.18"/>
<rect x="784.31" y="560.85" width="12.11" height="5.15" fill="#5bd63b"/>
<rect x="784.31" y="545.90" width="12.11" height="14.96" fill="#a5d72f"/>
<rect x="784.31" y="515.34" width="12.11" height="30.56" fill="#36d797"/>
<rect x="784.31" y="505.30" width="12.11" height="10.04" fill="#3bd650"/>
<rect x="784.31" y="514.84" width="12.11" height="1" fill="#ffffff" fill-opacity="0.8"/>
<rect x="784.31" y="545.40" width="12.11" height="1" fill="#ffffff" fill-opacity="0.8"/>
<rect x="784.31" y="560.35" width="12.11" height="1" fill="#ffffff" fill-opacity="0.8"/>
<rect x="783.81" y="505.30" width="1" height="60.70" fill="#ffffff" fill-opacity="0.18"/>
<rect x="796.43" y="559.36" width="12.11" height="6.64" fill="#5bd63b"/>
<rect x="796.43" y="538.42" width="12.11" height="20.94" fill="#a5d72f"/>
<rect x="796.43" y="471.11" width="12.11" height="67.31" fill="#36d797"/>
<rect x="796.43" y="451.24" width="12.11" height="19.87" fill="#3bd650"/>
<rect x="796.43" y="470.61" width="12.11" height="1" fill="#ffffff" fill-opacity="0.8"/>
<rect x="796.43" y="537.92" width="12.11" height="1" fill="#ffffff" fill-opacity="0.8"/>
<rect x="796.43" y="558.86" width="12.11" height="1" fill="#ffffff" fill-opacity="0.8"/>
<rect x="795.93" y="451.24" width="1" height="114.76" fill="#ffffff" fill-opacity="0.18"/>
<rect x="808.54" y="559.36" width="12.11" height="6.64" fill="#5bd63b"/>
<rect x="808.54" y="540.13" width="12.11" height="19.23" fill="#a5d72f"/>
<rect x="808.54" y="511.28" width="12.11" height="28.85" fill="#36d797"/>
<rect x="808.54" y="502.09" width="12.11" height="9.19" fill="#3bd650"/>
<rect x="808.54" y="510.78" width="12.11" height="1" fill="#ffffff" fill-opacity="0.8"/>
<rect x="808.54" y="539.63" width="12.11" height="1" fill="#ffffff" fill-opacity="0.8"/>
<rect x="808.54" y="558.86" width="12.11" height="1" fill="#ffffff" fill-opacity="0.8"/>
<rect x="808.04" y="502.09" width="1" height="63.91" fill="#ffffff" fill-opacity="0.18"/>
<rect x="820.65" y="559.36" width="12.11" height="6.64" fill="#5bd63b"/>
<rect x="820.65" y="526.24" width="12.11" height="33.12" fill="#a5d72f"/>
<rect x="820.65" y="492.48" width="12.11" height="33.76" fill="#36d797"/>
<rect x="820.65" y="474.96" width="12.11" height="17.52" fill="#3bd650"/>
<rect x="820.65" y="491.98" width="12.11" height="1" fill="#ffffff" fill-opacity="0.8"/>
<rect x="820.65" y="525.74" width="12.11" height="1" fill="#ffffff" fill-opacity="0.8"/>
<rect x="820.65" y="558.86" width="12.11" height="1" fill="#ffffff" fill-opacity="0.8"/>
<rect x="820.15" y="474.96" width="1" height="91.04" fill="#ffffff" fill-opacity="0.18"/>
<rect x="832.76" y="560.43" width="12.11" height="5.57" fill="#5bd63b"/>
<rect x="832.76" y="526.24" width="12.11" height="34.19" fill="#a5d72f"/>
<rect x="832.76" y="461.07" width="12.11" height="65.17" fill="#36d797"/>
<rect x="832.76" y="450.17" width="12.11" height="10.90" fill="#3bd650"/>
<rect x="832.76" y="460.57" width="12.11" height="1" fill="#ffffff" fill-opacity="0.8"/>
<rect x="832.76" y="525.74" width="12.11" height="1" fill="#ffffff" fill-opacity="0.8"/>
<rect x="832.76" y="559.93" width="12.11" height="1" fill="#ffffff" fill-opacity="0.8"/>
<rect x="832.26" y="450.17" width="1" height="115.83" fill="#ffffff" fill-opacity="0.18"/>
<rect x="844.87" y="558.29" width="12.11" height="7.71" fill="#5bd63b"/>
<rect x="844.87" y="535.21" width="12.11" height="23.08" fill="#a5d72f"/>
<rect x="844.87" y="404.44" width="12.11" height="130.77" fill="#36d797"/>
<rect x="844.87" y="387.14" width="12.11" height="17.31" fill="#3bd650"/>
<rect x="844.87" y="403.94" width="12.11" height="1" fill="#ffffff" fill-opacity="0.8"/>
<rect x="844.87" y="534.71" width="12.11" height="1" fill="#ffffff" fill-opacity="0.8"/>
<rect x="844.87" y="557.79" width="12.11" height="1" fill="#ffffff" fill-opacity="0.8"/>
<rect x="844.37" y="387.14" width="1" height="178.86" fill="#ffffff" fill-opacity="0.18"/>
<rect x="856.99" y="552.31" width="12.11" height="13.69" fill="#5bd63b"/>
<rect x="856.99" y="529.44" width="12.11" height="22.86" fill="#a5d72f"/>
<rect x="856.99" y="435.21" width="12.11" height="94.23" fill="#36d797"/>
<rect x="856.99" y="421.32" width="12.11" height="13.89" fill="#3bd650"/>
<rect x="856.99" y="434.71" width="12.11" height="1" fill="#ffffff" fill-opacity="0.8"/>
<rect x="856.99" y="528.94" width="12.11" height="1" fill="#ffffff" fill-opacity="0.8"/>
<rect x="856.99" y="551.81" width="12.11" height="1" fill="#ffffff" fill-opacity="0.8"/>
<rect x="856.49" y="421.32" width="1" height="144.68" fill="#ffffff" fill-opacity="0.18"/>
<rect x="869.10" y="554.44" width="12.11" height="11.56" fill="#5bd63b"/>
<rect x="869.10" y="530.94" width="12.11" height="23.50" fill="#a5d72f"/>
<rect x="869.10" y="447.18" width="12.11" height="83.76" fill="#36d797"/>
<rect x="869.10" y="436.92" width="12.11" height="10.26" fill="#3bd650"/>
<rect x="869.10" y="446.68" width="12.11" height="1" fill="#ffffff" fill-opacity="0.8"/>
<rect x="869.10" y="530.44" width="12.11" height="1" fill="#ffffff" fill-opacity="0.8"/>
<rect x="869.10" y="553.94" width="12.11" height="1" fill="#ffffff" fill-opacity="0.8"/>
<rect x="868.60" y="436.92" width="1" height="129.08" fill="#ffffff" fill-opacity="0.18"/>
<rect x="881.21" y="558.29" width="12.11" height="7.71" fill="#5bd63b"/>
<rect x="881.21" y="541.62" width="12.11" height="16.67" fill="#a5d72f"/>
<rect x="881.21" y="445.04" width="12.11" height="96.58" fill="#36d797"/>
<rect x="881.21" y="435.21" width="12.11" height="9.83" fill="#3bd650"/>
<rect x="881.21" y="444.54" width="12.11" height="1" fill="#ffffff" fill-opacity="0.8"/>
<rect x="881.21" y="541.12" width="12.11" height="1" fill="#ffffff" fill-opacity="0.8"/>
<rect x="881.21" y="557.79" width="12.11" height="1" fill="#ffffff" fill-opacity="0.8"/>
<rect x="880.71" y="435.21" width="1" height="130.79" fill="#ffffff" fill-opacity="0.18"/>
<rect x="893.32" y="554.44" width="12.11" height="11.56" fill="#5bd63b"/>
<rect x="893.32" y="536.28" width="12.11" height="18.16" fill="#a5d72f"/>
<rect x="893.32" y="457.22" width="12.11" height="79.06" fill="#36d797"/>
<rect x="893.32" y="445.04" width="12.11" height="12.18" fill="#3bd650"/>
<rect x="893.32" y="456.72" width="12.11" height="1" fill="#ffffff" fill-opacity="0.8"/>
<rect x="893.32" y="535.78" width="12.11" height="1" fill="#ffffff" fill-opacity="0.8"/>
<rect x="893.32" y="553.94" width="12.11" height="1" fill="#ffffff" fill-opacity="0.8"/>
<rect x="892.82" y="445.04" width="1" height="120.96" fill="#ffffff" fill-opacity="0.18"/>
<rect x="905.43" y="558.29" width="12.11" height="7.71" fill="#5bd63b"/>
<rect x="905.43" y="541.20" width="12.11" height="17.09" fill="#a5d72f"/>
<rect x="905.43" y="476.45" width="12.11" height="64.74" fill="#36d797"/>
<rect x="905.43" y="469.40" width="12.11" height="7.05" fill="#3bd650"/>
<rect x="905.43" y="475.95" width="12.11" height="1" fill="#ffffff" fill-opacity="0.8"/>
<rect x="905.43" y="540.70" width="12.11" height="1" fill="#ffffff" fill-opacity="0.8"/>
<rect x="905.43" y="557.79" width="12.11" height="1" fill="#ffffff" fill-opacity="0.8"/>
<rect x="904.93" y="469.40" width="1" height="96.60" fill="#ffffff" fill-opacity="0.18"/>
<rect x="917.55" y="560.43" width="12.11" height="5.57" fill="#5bd63b"/>
<rect x="917.55" y="544.83" width="12.11" height="15.60" fill="#a5d72f"/>
<rect x="917.55" y="456.15" width="12.11" height="88.68" fill="#36d797"/>
<rect x="917.55" y="450.38" width="12.11" height="5.77" fill="#3bd650"/>
<rect x="917.55" y="455.65" width="12.11" height="1" fill="#ffffff" fill-opacity="0.8"/>
<rect x="917.55" y="544.33" width="12.11" height="1" fill="#ffffff" fill-opacity="0.8"/>
<rect x="917.55" y="559.93" width="12.11" height="1" fill="#ffffff" fill-opacity="0.8"/>
<rect x="917.05" y="450.38" width="1" height="115.62" fill="#ffffff" fill-opacity="0.18"/>
<rect x="929.66" y="557.22" width="12.11" height="8.78" fill="#5bd63b"/>
<rect x="929.66" y="541.20" width="12.11" height="16.03" fill="#a5d72f"/>
<rect x="929.66" y="463.21" width="12.11" height="77.99" fill="#36d797"/>
<rect x="929.66" y="454.02" width="12.11" height="9.19" fill="#3bd650"/>
<rect x="929.66" y="462.71" width="12.11" height="1" fill="#ffffff" fill-opacity="0.8"/>
<rect x="929.66" y="540.70" width="12.11" height="1" fill="#ffffff" fill-opacity="0.8"/>
<rect x="929.66" y="556.72" width="12.11" height="1" fill="#ffffff" fill-opacity="0.8"/>
<rect x="929.16" y="454.02" width="1" height="111.98" fill="#ffffff" fill-opacity="0.18"/>
<rect x="941.77" y="558.29" width="12.11" height="7.71" fill="#5bd63b"/>
<rect x="941.77" y="543.76" width="12.11" height="14.53" fill="#a5d72f"/>
<rect x="941.77" y="490.98" width="12.11" height="52.78" fill="#36d797"/>
<rect x="941.77" y="487.14" width="12.11" height="3.85" fill="#3bd650"/>
<rect x="941.77" y="490.48" width="12.11" height="1" fill="#ffffff" fill-opacity="0.8"/>
<rect x="941.77" y="543.26" width="12.11" height="1" fill="#ffffff" fill-opacity="0.8"/>
<rect x="941.77" y="557.79" width="12.11" height="1" fill="#ffffff" fill-opacity="0.8"/>
<rect x="941.27" y="487.14" width="1" height="78.86" fill="#ffffff" fill-opacity="0.18"/>
<rect x="953.88" y="558.29" width="12.11" height="7.71" fill="#5bd63b"/>
<rect x="953.88" y="542.69" width="12.11" height="15.60" fill="#a5d72f"/>
<rect x="953.88" y="493.12" width="12.11" height="49.57" fill="#36d797"/>
<rect x="953.88" y="486.07" width="12.11" height="7.05" fill="#3bd650"/>
<rect x="953.88" y="492.62" width="12.11" height="1" fill="#ffffff" fill-opacity="0.8"/>
<rect x="953.88" y="542.19" width="12.11" height="1" fill="#ffffff" fill-opacity="0.8"/>
<rect x="953.88" y="557.79" width="12.11" height="1" fill="#ffffff" fill-opacity="0.8"/>
<rect x="953.38" y="486.07" width="1" height="79.93" fill="#ffffff" fill-opacity="0.18"/>
<rect x="965.99" y="558.29" width="12.11" height="7.71" fill="#5bd63b"/>
<rect x="965.99" y="542.69" width="12.11" height="15.60" fill="#a5d72f"/>
<rect x="965.99" y="490.98" width="12.11" height="51.71" fill="#36d797"/>
<rect x="965.99" y="485.43" width="12.11" height="5.56" fill="#3bd650"/>
<rect x="965.99" y="490.48" width="12.11" height="1" fill="#ffffff" fill-opacity="0.8"/>
<rect x="965.99" y="542.19" width="12.11" height="1" fill="#ffffff" fill-opacity="0.8"/>
<rect x="965.99" y="557.79" width="12.11" height="1" fill="#ffffff" fill-opacity="0.8"/>
<rect x="965.49" y="485.43" width="1" height="80.57" fill="#ffffff" fill-opacity="0.18"/>
<rect x="978.11" y="558.72" width="12.11" height="7.28" fill="#5bd63b"/>
<rect x="978.11" y="547.39" width="12.11" height="11.32" fill="#a5d72f"/>
<rect x="978.11" y="497.39" width="12.11" height="50.00" fill="#36d797"/>
<rect x="978.11" y="491.41" width="12.11" height="5.98" fill="#3bd650"/>
<rect x="978.11" y="496.89" width="12.11" height="1" fill="#ffffff" fill-opacity="0.8"/>
<rect x="978.11" y="546.89" width="12.11" height="1" fill="#ffffff" fill-opacity="0.8"/>
<rect x="978.11" y="558.22" width="12.11" height="1" fill="#ffffff" fill-opacity="0.8"/>
<rect x="977.61" y="491.41" width="1" height="74.59" fill="#ffffff" fill-opacity="0.18"/>
<rect x="990.22" y="550.81" width="12.11" height="15.19" fill="#5bd63b"/>
<rect x="990.22" y="533.50" width="12.11" height="17.31" fill="#a5d72f"/>
<rect x="990.22" y="489.91" width="12.11" height="43.59" fill="#36d797"/>
<rect x="990.22" y="479.23" width="12.11" height="10.68" fill="#3bd650"/>
<rect x="990.22" y="489.41" width="12.11" height="1" fill="#ffffff" fill-opacity="0.8"/>
<rect x="990.22" y="533.00" width="12.11" height="1" fill="#ffffff" fill-opacity="0.8"/>
<rect x="990.22" y="550.31" width="12.11" height="1" fill="#ffffff" fill-opacity="0.8"/>
<rect x="989.72" y="479.23" width="1" height="86.77" fill="#ffffff" fill-opacity="0.18"/>
<rect x="1002.33" y="557.65" width="12.11" height="8.35" fill="#5bd63b"/>
<rect x="1002.33" y="528.80" width="12.11" height="28.85" fill="#a5d72f"/>
<rect x="1002.33" y="489.27" width="12.11" height="39.53" fill="#36d797"/>
<rect x="1002.33" y="480.30" width="12.11" height="8.97" fill="#3bd650"/>
<rect x="1002.33" y="488.77" width="12.11" height="1" fill="#ffffff" fill-opacity="0.8"/>
<rect x="1002.33" y="528.30" width="12.11" height="1" fill="#ffffff" fill-opacity="0.8"/>
<rect x="1002.33" y="557.15" width="12.11" height="1" fill="#ffffff" fill-opacity="0.8"/>
<rect x="1001.83" y="480.30" width="1" height="85.70" fill="#ffffff" fill-opacity="0.18"/>
<rect x="1014.44" y="558.29" width="12.11" height="7.71" fill="#5bd63b"/>
<rect x="1014.44" y="539.49" width="12.11" height="18.80" fill="#a5d72f"/>
<rect x="1014.44" y="499.32" width="12.11" height="40.17" fill="#36d797"/>
<rect x="1014.44" y="492.48" width="12.11" height="6.84" fill="#3bd650"/>
<rect x="1014.44" y="498.82" width="12.11" height="1" fill="#ffffff" fill-opacity="0.8"/>
<rect x="1014.44" y="538.99" width="12.11" height="1" fill="#ffffff" fill-opacity="0.8"/>
<rect x="1014.44" y="557.79" width="12.11" height="1" fill="#ffffff" fill-opacity="0.8"/>
<rect x="1013.94" y="492.48" width="1" height="73.52" fill="#ffffff" fill-opacity="0.18"/>
<rect x="1026.55" y="558.29" width="12.11" height="7.71" fill="#5bd63b"/>
<rect x="1026.55" y="542.26" width="12.11" height="16.03" fill="#a5d72f"/>
<rect x="1026.55" y="483.50" width="12.11" height="58.76" fill="#36d797"/>
<rect x="1026.55" y="475.38" width="12.11" height="8.12" fill="#3bd650"/>
<rect x="1026.55" y="483.00" width="12.11" height="1" fill="#ffffff" fill-opacity="0.8"/>
<rect x="1026.55" y="541.76" width="12.11" height="1" fill="#ffffff" fill-opacity="0.8"/>
<rect x="1026.55" y="557.79" width="12.11" height="1" fill="#ffffff" fill-opacity="0.8"/>
<rect x="1026.05" y="475.38" width="1" height="90.62" fill="#ffffff" fill-opacity="0.18"/>
<rect x="1038.67" y="556.15" width="12.11" height="9.85" fill="#5bd63b"/>
<rect x="1038.67" y="538.42" width="12.11" height="17.74" fill="#a5d72f"/>
<rect x="1038.67" y="488.63" width="12.11" height="49.79" fill="#36d797"/>
<rect x="1038.67" y="478.16" width="12.11" height="10.47" fill="#3bd650"/>
<rect x="1038.67" y="488.13" width="12.11" height="1" fill="#ffffff" fill-opacity="0.8"/>
<rect x="1038.67" y="537.92" width="12.11" height="1" fill="#ffffff" fill-opacity="0.8"/>
<rect x="1038.67" y="555.65" width="12.11" height="1" fill="#ffffff" fill-opacity="0.8"/>
<rect x="1038.17" y="478.16" width="1" height="87.84" fill="#ffffff" fill-opacity="0.18"/>
<rect x="1050.78" y="558.72" width="12.11" height="7.28" fill="#5bd63b"/>
<rect x="1050.78" y="541.62" width="12.11" height="17.09" fill="#a5d72f"/>
<rect x="1050.78" y="502.52" width="12.11" height="39.10" fill="#36d797"/>
<rect x="1050.78" y="497.18" width="12.11" height="5.34" fill="#3bd650"/>
<rect x="1050.78" y="502.02" width="12.11" height="1" fill="#ffffff" fill-opacity="0.8"/>
<rect x="1050.78" y="541.12" width="12.11" height="1" fill="#ffffff" fill-opacity="0.8"/>
<rect x="1050.78" y="558.22" width="12.11" height="1" fill="#ffffff" fill-opacity="0.8"/>
<rect x="1050.28" y="497.18" width="1" height="68.82" fill="#ffffff" fill-opacity="0.18"/>
<rect x="1062.89" y="556.15" width="12.11" height="9.85" fill="#5bd63b"/>
<rect x="1062.89" y="543.12" width="12.11" height="13.03" fill="#a5d72f"/>
<rect x="1062.89" y="475.38" width="12.11" height="67.74" fill="#36d797"/>
<rect x="1062.89" y="466.20" width="12.11" height="9.19" fill="#3bd650"/>
<rect x="1062.89" y="474.88" width="12.11" height="1" fill="#ffffff" fill-opacity="0.8"/>
<rect x="1062.89" y="542.62" width="12.11" height="1" fill="#ffffff" fill-opacity="0.8"/>
<rect x="1062.89" y="555.65" width="12.11" height="1" fill="#ffffff" fill-opacity="0.8"/>
<rect x="1062.39" y="466.20" width="1" height="99.80" fill="#ffffff" fill-opacity="0.18"/>
<rect x="1075.00" y="559.79" width="12.11" height="6.21" fill="#5bd63b"/>
<rect x="1075.00" y="531.37" width="12.11" height="28.42" fill="#a5d72f"/>
<rect x="1075.00" y="464.70" width="12.11" height="66.67" fill="#36d797"/>
<rect x="1075.00" y="455.09" width="12.11" height="9.62" fill="#3bd650"/>
<rect x="1075.00" y="464.20" width="12.11" height="1" fill="#ffffff" fill-opacity="0.8"/>
<rect x="1075.00" y="530.87" width="12.11" height="1" fill="#ffffff" fill-opacity="0.8"/>
<rect x="1075.00" y="559.29" width="12.11" height="1" fill="#ffffff" fill-opacity="0.8"/>
<rect x="1074.50" y="455.09" width="1" height="110.91" fill="#ffffff" fill-opacity="0.18"/>
<rect x="1087.11" y="554.87" width="12.11" height="11.13" fill="#5bd63b"/>
<rect x="1087.11" y="500.60" width="12.11" height="54.27" fill="#a5d72f"/>
<rect x="1087.11" y="437.35" width="12.11" height="63.25" fill="#36d797"/>
<rect x="1087.11" y="427.95" width="12.11" height="9.40" fill="#3bd650"/>
<rect x="1087.11" y="436.85" width="12.11" height="1" fill="#ffffff" fill-opacity="0.8"/>
<rect x="1087.11" y="500.10" width="12.11" height="1" fill="#ffffff" fill-opacity="0.8"/>
<rect x="1087.11" y="554.37" width="12.11" height="1" fill="#ffffff" fill-opacity="0.8"/>
<rect x="1086.61" y="427.95" width="1" height="138.05" fill="#ffffff" fill-opacity="0.18"/>
<rect x="1099.22" y="557.65" width="12.11" height="8.35" fill="#5bd63b"/>
<rect x="1099.22" y="529.44" width="12.11" height="28.21" fill="#a5d72f"/>
<rect x="1099.22" y="432.65" width="12.11" height="96.79" fill="#36d797"/>
<rect x="1099.22" y="420.26" width="12.11" height="12.39" fill="#3bd650"/>
<rect x="1099.22" y="432.15" width="12.11" height="1" fill="#ffffff" fill-opacity="0.8"/>
<rect x="1099.22" y="528.94" width="12.11" height="1" fill="#ffffff" fill-opacity="0.8"/>
<rect x="1099.22" y="557.15" width="12.11" height="1" fill="#ffffff" fill-opacity="0.8"/>
<rect x="1098.72" y="420.26" width="1" height="145.74" fill="#ffffff" fill-opacity="0.18"/>
<rect x="1111.34" y="556.58" width="12.11" height="9.42" fill="#5bd63b"/>
<rect x="1111.34" y="528.80" width="12.11" height="27.78" fill="#a5d72f"/>
<rect x="1111.34" y="438.63" width="12.11" height="90.17" fill="#36d797"/>
<rect x="1111.34" y="424.10" width="12.11" height="14.53" fill="#3bd650"/>
<rect x="1111.34" y="438.13" width="12.11" height="1" fill="#ffffff" fill-opacity="0.8"/>
<rect x="1111.34" y="528.30" width="12.11" height="1" fill="#ffffff" fill-opacity="0.8"/>
<rect x="1111.34" y="556.08" width="12.11" height="1" fill="#ffffff" fill-opacity="0.8"/>
<rect x="1110.84" y="424.10" width="1" height="141.90" fill="#ffffff" fill-opacity="0.18"/>
<rect x="1123.45" y="555.51" width="12.11" height="10.49" fill="#5bd63b"/>
<rect x="1123.45" y="520.26" width="12.11" height="35.26" fill="#a5d72f"/>
<rect x="1123.45" y="455.51" width="12.11" height="64.74" fill="#36d797"/>
<rect x="1123.45" y="442.26" width="12.11" height="13.25" fill="#3bd650"/>
<rect x="1123.45" y="455.01" width="12.11" height="1" fill="#ffffff" fill-opacity="0.8"/>
<rect x="1123.45" y="519.76" width="12.11" height="1" fill="#ffffff" fill-opacity="0.8"/>
<rect x="1123.45" y="555.01" width="12.11" height="1" fill="#ffffff" fill-opacity="0.8"/>
<rect x="1122.95" y="442.26" width="1" height="123.74" fill="#ffffff" fill-opacity="0.18"/>
<rect x="1135.56" y="556.15" width="12.11" height="9.85" fill="#5bd63b"/>
<rect x="1135.56" y="520.26" width="12.11" height="35.90" fill="#a5d72f"/>
<rect x="1135.56" y="455.51" width="12.11" height="64.74" fill="#36d797"/>
<rect x="1135.56" y="442.26" width="12.11" height="13.25" fill="#3bd650"/>
<rect x="1135.56" y="455.01" width="12.11" height="1" fill="#ffffff" fill-opacity="0.8"/>
<rect x="1135.56" y="519.76" width="12.11" height="1" fill="#ffffff" fill-opacity="0.8"/>
<rect x="1135.56" y="555.65" width="12.11" height="1" fill="#ffffff" fill-opacity="0.8"/>
<rect x="1135.06" y="442.26" width="1" height="123.74" fill="#ffffff" fill-opacity="0.18"/>
<rect x="1147.67" y="555.51" width="12.11" height="10.49" fill="#5bd63b"/>
<rect x="1147.67" y="510.64" width="12.11" height="44.87" fill="#a5d72f"/>
<rect x="1147.67" y="434.36" width="12.11" height="76.28" fill="#36d797"/>
<rect x="1147.67" y="423.46" width="12.11" height="10.90" fill="#3bd650"/>
<rect x="1147.67" y="433.86" width="12.11" height="1" fill="#ffffff" fill-opacity="0.8"/>
<rect x="1147.67" y="510.14" width="12.11" height="1" fill="#ffffff" fill-opacity="0.8"/>
<rect x="1147.67" y="555.01" width="12.11" height="1" fill="#ffffff" fill-opacity="0.8"/>
<rect x="1147.17" y="423.46" width="1" height="142.54" fill="#ffffff" fill-opacity="0.18"/>
<rect x="1159.78" y="559.36" width="12.11" height="6.64" fill="#5bd63b"/>
<rect x="1159.78" y="519.19" width="12.11" height="40.17" fill="#a5d72f"/>
<rect x="1159.78" y="431.58" width="12.11" height="87.61" fill="#36d797"/>
<rect x="1159.78" y="421.32" width="12.11" height="10.26" fill="#3bd650"/>
<rect x="1159.78" y="431.08" width="12.11" height="1" fill="#ffffff" fill-opacity="0.8"/>
<rect x="1159.78" y="518.69" width="12.11" height="1" fill="#ffffff" fill-opacity="0.8"/>
<rect x="1159.78" y="558.86" width="12.11" height="1" fill="#ffffff" fill-opacity="0.8"/>
<rect x="1159.28" y="421.32" width="1" height="144.68" fill="#ffffff" fill-opacity="0.18"/>
<rect x="1171.90" y="554.44" width="12.11" height="11.56" fill="#5bd63b"/>
<rect x="1171.90" y="516.62" width="12.11" height="37.82" fill="#a5d72f"/>
<rect x="1171.90" y="423.46" width="12.11" height="93.16" fill="#36d797"/>
<rect x="1171.90" y="411.92" width="12.11" height="11.54" fill="#3bd650"/>
<rect x="1171.90" y="422.96" width="12.11" height="1" fill="#ffffff" fill-opacity="0.8"/>
<rect x="1171.90" y="516.12" width="12.11" height="1" fill="#ffffff" fill-opacity="0.8"/>
<rect x="1171.90" y="553.94" width="12.11" height="1" fill="#ffffff" fill-opacity="0.8"/>
<rect x="1171.40" y="411.92" width="1" height="154.08" fill="#ffffff" fill-opacity="0.18"/>
<rect x="1184.01" y="554.44" width="12.11" height="11.56" fill="#5bd63b"/>
<rect x="1184.01" y="517.48" width="12.11" height="36.97" fill="#a5d72f"/>
<rect x="1184.01" y="446.54" width="12.11" height="70.94" fill="#36d797"/>
<rect x="1184.01" y="433.29" width="12.11" height="13.25" fill="#3bd650"/>
<rect x="1184.01" y="446.04" width="12.11" height="1" fill="#ffffff" fill-opacity="0.8"/>
<rect x="1184.01" y="516.98" width="12.11" height="1" fill="#ffffff" fill-opacity="0.8"/>
<rect x="1184.01" y="553.94" width="12.11" height="1" fill="#ffffff" fill-opacity="0.8"/>
<rect x="1183.51" y="433.29" width="1" height="132.71" fill="#ffffff" fill-opacity="0.18"/>
<rect x="1196.12" y="552.31" width="12.11" height="13.69" fill="#5bd63b"/>
<rect x="1196.12" y="513.42" width="12.11" height="38.89" fill="#a5d72f"/>
<rect x="1196.12" y="421.32" width="12.11" height="92.09" fill="#36d797"/>
<rect x="1196.12" y="409.15" width="12.11" height="12.18" fill="#3bd650"/>
<rect x="1196.12" y="420.82" width="12.11" height="1" fill="#ffffff" fill-opacity="0.8"/>
<rect x="1196.12" y="512.92" width="12.11" height="1" fill="#ffffff" fill-opacity="0.8"/>
<rect x="1196.12" y="551.81" width="12.11" height="1" fill="#ffffff" fill-opacity="0.8"/>
<rect x="1195.62" y="409.15" width="1" height="156.85" fill="#ffffff" fill-opacity="0.18"/>
<rect x="1208.23" y="555.09" width="12.11" height="10.91" fill="#5bd63b"/>
<rect x="1208.23" y="518.55" width="12.11" height="36.54" fill="#a5d72f"/>
<rect x="1208.23" y="407.44" width="12.11" height="111.11" fill="#36d797"/>
<rect x="1208.23" y="396.97" width="12.11" height="10.47" fill="#3bd650"/>
<rect x="1208.23" y="406.94" width="12.11" height="1" fill="#ffffff" fill-opacity="0.8"/>
<rect x="1208.23" y="518.05" width="12.11" height="1" fill="#ffffff" fill-opacity="0.8"/>
<rect x="1208.23" y="554.59" width="12.11" height="1" fill="#ffffff" fill-opacity="0.8"/>
<rect x="1207.73" y="396.97" width="1" height="169.03" fill="#ffffff" fill-opacity="0.18"/>
<rect x="1220.34" y="551.24" width="12.11" height="14.76" fill="#5bd63b"/>
<rect x="1220.34" y="530.51" width="12.11" height="20.73" fill="#a5d72f"/>
<rect x="1220.34" y="449.32" width="12.11" height="81.20" fill="#36d797"/>
<rect x="1220.34" y="435.21" width="12.11" height="14.10" fill="#3bd650"/>
<rect x="1220.34" y="448.82" width="12.11" height="1" fill="#ffffff" fill-opacity="0.8"/>
<rect x="1220.34" y="530.01" width="12.11" height="1" fill="#ffffff" fill-opacity="0.8"/>
<rect x="1220.34" y="550.74" width="12.11" height="1" fill="#ffffff" fill-opacity="0.8"/>
<rect x="1219.84" y="435.21" width="1" height="130.79" fill="#ffffff" fill-opacity="0.18"/>
<rect x="1232.46" y="552.74" width="12.11" height="13.26" fill="#5bd63b"/>
<rect x="1232.46" y="525.17" width="12.11" height="27.56" fill="#a5d72f"/>
<rect x="1232.46" y="448.25" width="12.11" height="76.92" fill="#36d797"/>
<rect x="1232.46" y="437.35" width="12.11" height="10.90" fill="#3bd650"/>
<rect x="1232.46" y="447.75" width="12.11" height="1" fill="#ffffff" fill-opacity="0.8"/>
<rect x="1232.46" y="524.67" width="12.11" height="1" fill="#ffffff" fill-opacity="0.8"/>
<rect x="1232.46" y="552.24" width="12.11" height="1" fill="#ffffff" fill-opacity="0.8"/>
<rect x="1231.96" y="437.35" width="1" height="128.65" fill="#ffffff" fill-opacity="0.18"/>
<rect x="1244.57" y="553.38" width="12.11" height="12.62" fill="#5bd63b"/>
<rect x="1244.57" y="513.42" width="12.11" height="39.96" fill="#a5d72f"/>
<rect x="1244.57" y="429.44" width="12.11" height="83.97" fill="#36d797"/>
<rect x="1244.57" y="418.12" width="12.11" height="11.32" fill="#3bd650"/>
<rect x="1244.57" y="428.94" width="12.11" height="1" fill="#ffffff" fill-opacity="0.8"/>
<rect x="1244.57" y="512.92" width="12.11" height="1" fill="#ffffff" fill-opacity="0.8"/>
<rect x="1244.57" y="552.88" width="12.11" height="1" fill="#ffffff" fill-opacity="0.8"/>
<rect x="1244.07" y="418.12" width="1" height="147.88" fill="#ffffff" fill-opacity="0.18"/>
<rect x="1256.68" y="552.74" width="12.11" height="13.26" fill="#5bd63b"/>
<rect x="1256.68" y="514.27" width="12.11" height="38.46" fill="#a5d72f"/>
<rect x="1256.68" y="449.32" width="12.11" height="64.96" fill="#36d797"/>
<rect x="1256.68" y="437.35" width="12.11" height="11.97" fill="#3bd650"/>
<rect x="1256.68" y="448.82" width="12.11" height="1" fill="#ffffff" fill-opacity="0.8"/>
<rect x="1256.68" y="513.77" width="12.11" height="1" fill="#ffffff" fill-opacity="0.8"/>
<rect x="1256.68" y="552.24" width="12.11" height="1" fill="#ffffff" fill-opacity="0.8"/>
<rect x="1256.18" y="437.35" width="1" height="128.65" fill="#ffffff" fill-opacity="0.18"/>
<rect x="1268.79" y="555.09" width="12.11" height="10.91" fill="#5bd63b"/>
<rect x="1268.79" y="522.39" width="12.11" height="32.69" fill="#a5d72f"/>
<rect x="1268.79" y="477.09" width="12.11" height="45.30" fill="#36d797"/>
<rect x="1268.79" y="468.33" width="12.11" height="8.76" fill="#3bd650"/>
<rect x="1268.79" y="476.59" width="12.11" height="1" fill="#ffffff" fill-opacity="0.8"/>
<rect x="1268.79" y="521.89" width="12.11" height="1" fill="#ffffff" fill-opacity="0.8"/>
<rect x="1268.79" y="554.59" width="12.11" height="1" fill="#ffffff" fill-opacity="0.8"/>
<rect x="1268.29" y="468.33" width="1" height="97.67" fill="#ffffff" fill-opacity="0.18"/>
<rect x="1280.90" y="558.29" width="12.11" height="7.71" fill="#5bd63b"/>
<rect x="1280.90" y="529.44" width="12.11" height="28.85" fill="#a5d72f"/>
<rect x="1280.90" y="444.40" width="12.11" height="85.04" fill="#36d797"/>
<rect x="1280.90" y="434.15" width="12.11" height="10.26" fill="#3bd650"/>
<rect x="1280.90" y="443.90" width="12.11" height="1" fill="#ffffff" fill-opacity="0.8"/>
<rect x="1280.90" y="528.94" width="12.11" height="1" fill="#ffffff" fill-opacity="0.8"/>
<rect x="1280.90" y="557.79" width="12.11" height="1" fill="#ffffff" fill-opacity="0.8"/>
<rect x="1280.40" y="434.15" width="1" height="131.85" fill="#ffffff" fill-opacity="0.18"/>
<rect x="1293.02" y="557.65" width="12.11" height="8.35" fill="#5bd63b"/>
<rect x="1293.02" y="508.50" width="12.11" height="49.15" fill="#a5d72f"/>
<rect x="1293.02" y="383.08" width="12.11" height="125.43" fill="#36d797"/>
<rect x="1293.02" y="376.03" width="12.11" height="7.05" fill="#3bd650"/>
<rect x="1293.02" y="382.58" width="12.11" height="1" fill="#ffffff" fill-opacity="0.8"/>
<rect x="1293.02" y="508.00" width="12.11" height="1" fill="#ffffff" fill-opacity="0.8"/>
<rect x="1293.02" y="557.15" width="12.11" height="1" fill="#ffffff" fill-opacity="0.8"/>
<rect x="1292.52" y="376.03" width="1" height="189.97" fill="#ffffff" fill-opacity="0.18"/>
<rect x="1305.13" y="560.43" width="12.11" height="5.57" fill="#5bd63b"/>
<rect x="1305.13" y="516.62" width="12.11" height="43.80" fill="#a5d72f"/>
<rect x="1305.13" y="437.35" width="12.11" height="79.27" fill="#36d797"/>
<rect x="1305.13" y="429.02" width="12.11" height="8.33" fill="#3bd650"/>
<rect x="1305.13" y="436.85" width="12.11" height="1" fill="#ffffff" fill-opacity="0.8"/>
<rect x="1305.13" y="516.12" width="12.11" height="1" fill="#ffffff" fill-opacity="0.8"/>
<rect x="1305.13" y="559.93" width="12.11" height="1" fill="#ffffff" fill-opacity="0.8"/>
<rect x="1304.63" y="429.02" width="1" height="136.98" fill="#ffffff" fill-opacity="0.18"/>
<rect x="1317.24" y="561.50" width="12.11" height="4.50" fill="#5bd63b"/>
<rect x="1317.24" y="529.44" width="12.11" height="32.05" fill="#a5d72f"/>
<rect x="1317.24" y="433.29" width="12.11" height="96.15" fill="#36d797"/>
<rect x="1317.24" y="427.31" width="12.11" height="5.98" fill="#3bd650"/>
<rect x="1317.24" y="432.79" width="12.11" height="1" fill="#ffffff" fill-opacity="0.8"/>
<rect x="1317.24" y="528.94" width="12.11" height="1" fill="#ffffff" fill-opacity="0.8"/>
<rect x="1317.24" y="561.00" width="12.11" height="1" fill="#ffffff" fill-opacity="0.8"/>
<rect x="1316.74" y="427.31" width="1" height="138.69" fill="#ffffff" fill-opacity="0.18"/>
<rect x="1329.35" y="552.31" width="12.11" height="13.69" fill="#5bd63b"/>
<rect x="1329.35" y="511.28" width="12.11" height="41.03" fill="#a5d72f"/>
<rect x="1329.35" y="391.41" width="12.11" height="119.87" fill="#36d797"/>
<rect x="1329.35" y="378.16" width="12.11" height="13.25" fill="#3bd650"/>
<rect x="1329.35" y="390.91" width="12.11" height="1" fill="#ffffff" fill-opacity="0.8"/>
<rect x="1329.35" y="510.78" width="12.11" height="1" fill="#ffffff" fill-opacity="0.8"/>
<rect x="1329.35" y="551.81" width="12.11" height="1" fill="#ffffff" fill-opacity="0.8"/>
<rect x="1328.85" y="378.16" width="1" height="187.84" fill="#ffffff" fill-opacity="0.18"/>
<rect x="1341.46" y="560.43" width="12.11" height="5.57" fill="#5bd63b"/>
<rect x="1341.46" y="525.17" width="12.11" height="35.26" fill="#a5d72f"/>
<rect x="1341.46" y="419.19" width="12.11" height="105.98" fill="#36d797"/>
<rect x="1341.46" y="409.15" width="12.11" height="10.04" fill="#3bd650"/>
<rect x="1341.46" y="418.69" width="12.11" height="1" fill="#ffffff" fill-opacity="0.8"/>
<rect x="1341.46" y="524.67" width="12.11" height="1" fill="#ffffff" fill-opacity="0.8"/>
<rect x="1341.46" y="559.93" width="12.11" height="1" fill="#ffffff" fill-opacity="0.8"/>
<rect x="1340.96" y="409.15" width="1" height="156.85" fill="#ffffff" fill-opacity="0.18"/>
<rect x="1353.58" y="551.24" width="12.11" height="14.76" fill="#5bd63b"/>
<rect x="1353.58" y="535.21" width="12.11" height="16.03" fill="#a5d72f"/>
<rect x="1353.58" y="414.49" width="12.11" height="120.73" fill="#36d797"/>
<rect x="1353.58" y="399.96" width="12.11" height="14.53" fill="#3bd650"/>
<rect x="1353.58" y="413.99" width="12.11" height="1" fill="#ffffff" fill-opacity="0.8"/>
<rect x="1353.58" y="534.71" width="12.11" height="1" fill="#ffffff" fill-opacity="0.8"/>
<rect x="1353.58" y="550.74" width="12.11" height="1" fill="#ffffff" fill-opacity="0.8"/>
<rect x="1353.08" y="399.96" width="1" height="166.04" fill="#ffffff" fill-opacity="0.18"/>
<rect x="1365.69" y="550.17" width="12.11" height="15.83" fill="#5bd63b"/>
<rect x="1365.69" y="524.53" width="12.11" height="25.64" fill="#a5d72f"/>
<rect x="1365.69" y="426.24" width="12.11" height="98.29" fill="#36d797"/>
<rect x="1365.69" y="411.92" width="12.11" height="14.32" fill="#3bd650"/>
<rect x="1365.69" y="425.74" width="12.11" height="1" fill="#ffffff" fill-opacity="0.8"/>
<rect x="1365.69" y="524.03" width="12.11" height="1" fill="#ffffff" fill-opacity="0.8"/>
<rect x="1365.69" y="549.67" width="12.11" height="1" fill="#ffffff" fill-opacity="0.8"/>
<rect x="1365.19" y="411.92" width="1" height="154.08" fill="#ffffff" fill-opacity="0.18"/>
<rect x="541.33" y="411.28" width="1.5" height="154.72" fill="#ffffff" fill-opacity="0.75"/>
<rect x="1098.47" y="427.95" width="1.5" height="138.05" fill="#ffffff" fill-opacity="0.75"/>
<rect x="263.5" y="565.5" width="1114.5" height="1" fill="#333333"/>
<text x="251" y="376.8" text-anchor="end" font-size="12" fill="#444444">10M</text>
<text x="251" y="473.8" text-anchor="end" font-size="12" fill="#444444">5M</text>
<text x="251" y="570.3" text-anchor="end" font-size="12" fill="#444444">0</text>
<text x="272.06" y="584.0" text-anchor="end" font-size="12" fill="#3a3a3a" transform="rotate(-30 272.06 584.0)">2016-08-01</text>
<text x="308.39" y="584.0" text-anchor="end" font-size="12" fill="#3a3a3a" transform="rotate(-30 308.39 584.0)">2016-08-04</text>
<text x="344.73" y="584.0" text-anchor="end" font-size="12" fill="#3a3a3a" transform="rotate(-30 344.73 584.0)">2016-08-07</text>
<text x="381.06" y="584.0" text-anchor="end" font-size="12" fill="#3a3a3a" transform="rotate(-30 381.06 584.0)">2016-08-10</text>
<text x="417.40" y="584.0" text-anchor="end" font-size="12" fill="#3a3a3a" transform="rotate(-30 417.40 584.0)">2016-08-13</text>
<text x="453.74" y="584.0" text-anchor="end" font-size="12" fill="#3a3a3a" transform="rotate(-30 453.74 584.0)">2016-08-16</text>
<text x="490.07" y="584.0" text-anchor="end" font-size="12" fill="#3a3a3a" transform="rotate(-30 490.07 584.0)">2016-08-19</text>
<text x="526.41" y="584.0" text-anchor="end" font-size="12" fill="#3a3a3a" transform="rotate(-30 526.41 584.0)">2016-08-22</text>
<text x="562.74" y="584.0" text-anchor="end" font-size="12" fill="#3a3a3a" transform="rotate(-30 562.74 584.0)">2016-08-25</text>
<text x="599.08" y="584.0" text-anchor="end" font-size="12" fill="#3a3a3a" transform="rotate(-30 599.08 584.0)">2016-08-28</text>
<text x="635.41" y="584.0" text-anchor="end" font-size="12" fill="#3a3a3a" transform="rotate(-30 635.41 584.0)">2016-08-31</text>
<text x="671.75" y="584.0" text-anchor="end" font-size="12" fill="#3a3a3a" transform="rotate(-30 671.75 584.0)">2016-09-03</text>
<text x="708.09" y="584.0" text-anchor="end" font-size="12" fill="#3a3a3a" transform="rotate(-30 708.09 584.0)">2016-09-06</text>
<text x="744.42" y="584.0" text-anchor="end" font-size="12" fill="#3a3a3a" transform="rotate(-30 744.42 584.0)">2016-09-09</text>
<text x="780.76" y="584.0" text-anchor="end" font-size="12" fill="#3a3a3a" transform="rotate(-30 780.76 584.0)">2016-09-12</text>
<text x="817.09" y="584.0" text-anchor="end" font-size="12" fill="#3a3a3a" transform="rotate(-30 817.09 584.0)">2016-09-15</text>
<text x="853.43" y="584.0" text-anchor="end" font-size="12" fill="#3a3a3a" transform="rotate(-30 853.43 584.0)">2016-09-18</text>
<text x="889.77" y="584.0" text-anchor="end" font-size="12" fill="#3a3a3a" transform="rotate(-30 889.77 584.0)">2016-09-21</text>
<text x="926.10" y="584.0" text-anchor="end" font-size="12" fill="#3a3a3a" transform="rotate(-30 926.10 584.0)">2016-09-24</text>
<text x="962.44" y="584.0" text-anchor="end" font-size="12" fill="#3a3a3a" transform="rotate(-30 962.44 584.0)">2016-09-27</text>
<text x="998.77" y="584.0" text-anchor="end" font-size="12" fill="#3a3a3a" transform="rotate(-30 998.77 584.0)">2016-09-30</text>
<text x="1035.11" y="584.0" text-anchor="end" font-size="12" fill="#3a3a3a" transform="rotate(-30 1035.11 584.0)">2016-10-03</text>
<text x="1071.45" y="584.0" text-anchor="end" font-size="12" fill="#3a3a3a" transform="rotate(-30 1071.45 584.0)">2016-10-06</text>
<text x="1107.78" y="584.0" text-anchor="end" font-size="12" fill="#3a3a3a" transform="rotate(-30 1107.78 584.0)">2016-10-09</text>
<text x="1144.12" y="584.0" text-anchor="end" font-size="12" fill="#3a3a3a" transform="rotate(-30 1144.12 584.0)">2016-10-12</text>
<text x="1180.45" y="584.0" text-anchor="end" font-size="12" fill="#3a3a3a" transform="rotate(-30 1180.45 584.0)">2016-10-15</text>
<text x="1216.79" y="584.0" text-anchor="end" font-size="12" fill="#3a3a3a" transform="rotate(-30 1216.79 584.0)">2016-10-18</text>
<text x="1253.12" y="584.0" text-anchor="end" font-size="12" fill="#3a3a3a" transform="rotate(-30 1253.12 584.0)">2016-10-21</text>
<text x="1289.46" y="584.0" text-anchor="end" font-size="12" fill="#3a3a3a" transform="rotate(-30 1289.46 584.0)">2016-10-24</text>
<text x="1325.80" y="584.0" text-anchor="end" font-size="12" fill="#3a3a3a" transform="rotate(-30 1325.80 584.0)">2016-10-27</text>
<text x="1362.13" y="584.0" text-anchor="end" font-size="12" fill="#3a3a3a" transform="rotate(-30 1362.13 584.0)">2016-10-30</text>
<rect x="459.8" y="623.1" width="24" height="11.8" fill="#dd5130"/>
<text x="488.8" y="632.6" font-size="12" fill="#333333">pagetype = #nomatch</text>
<rect x="623.3" y="623.1" width="24" height="11.8" fill="#5bd63b"/>
<text x="652.3" y="632.6" font-size="12" fill="#333333">pagetype = ca/*</text>
<rect x="754.2" y="623.1" width="24" height="11.8" fill="#a5d72f"/>
<text x="783.2" y="632.6" font-size="12" fill="#333333">pagetype = co.uk/*</text>
<rect x="901.3" y="623.1" width="24" height="11.8" fill="#36d797"/>
<text x="930.3" y="632.6" font-size="12" fill="#333333">pagetype = com/*</text>
<rect x="1042.1" y="623.1" width="24" height="11.8" fill="#3bd650"/>
<text x="1071.1" y="632.6" font-size="12" fill="#333333">pagetype = com.au/*</text>
<path d="M1660.5,454.9 L1660.50,358.00 A96.9,96.9 0 0 1 1708.22,370.56 Z" fill="#5bd63b" stroke="#ffffff" stroke-width="1"/>
<path d="M1660.5,454.9 L1708.22,370.56 A96.9,96.9 0 0 1 1752.15,486.36 Z" fill="#a5d72f" stroke="#ffffff" stroke-width="1"/>
<path d="M1660.5,454.9 L1752.15,486.36 A96.9,96.9 0 1 1 1603.74,376.36 Z" fill="#36d797" stroke="#ffffff" stroke-width="1"/>
<path d="M1660.5,454.9 L1603.74,376.36 A96.9,96.9 0 0 1 1660.50,358.00 Z" fill="#3bd650" stroke="#ffffff" stroke-width="1"/>
<text x="1679" y="386.3" text-anchor="middle" font-size="12" fill="#ffffff" stroke="#ffffff" stroke-width="0.35">8.2%</text>
<text x="1722.5" y="435.3" text-anchor="middle" font-size="12" fill="#ffffff" stroke="#ffffff" stroke-width="0.35">22.1%</text>
<text x="1619" y="514.3" text-anchor="middle" font-size="12" fill="#ffffff" stroke="#ffffff" stroke-width="0.35">59.8%</text>
<text x="1637" y="388.3" text-anchor="middle" font-size="12" fill="#ffffff" stroke="#ffffff" stroke-width="0.35">10%</text></svg>
<div class="a th" style="left:206px;top:649.5px">Segment</div>
<div class="a th" style="left:966px;top:649.5px">Crawl Volume</div>
<div class="a th" style="left:1537px;top:649.5px">%</div>
<div class="a" style="left:191px;top:672px;width:1679px;height:2px;background:#e3e7eb"></div>
<div class="a td" style="left:206px;top:681.0px">Pagetype = ca/*</div>
<div class="a td" style="left:966px;top:681.0px">49,936,146</div>
<div class="a td" style="left:1537px;top:681.0px">8.2 %</div>
<div class="a" style="left:191px;top:704.0px;width:1679px;height:1px;background:#eceff1"></div>
<div class="a td" style="left:206px;top:711.7px">Pagetype = co.uk/*</div>
<div class="a td" style="left:966px;top:711.7px">134,485,979</div>
<div class="a td" style="left:1537px;top:711.7px">22.1 %</div>
<div class="a" style="left:191px;top:734.6px;width:1679px;height:1px;background:#eceff1"></div>
<div class="a td" style="left:206px;top:742.4px">Pagetype = com/*</div>
<div class="a td" style="left:966px;top:742.4px">364,280,762</div>
<div class="a td" style="left:1537px;top:742.4px">59.8 %</div>
<div class="a" style="left:191px;top:765.2px;width:1679px;height:1px;background:#eceff1"></div>
<div class="a td" style="left:206px;top:773.1px">Pagetype = com.au/*</div>
<div class="a td" style="left:966px;top:773.1px">60,694,140</div>
<div class="a td" style="left:1537px;top:773.1px">10.0 %</div>
</body></html>
